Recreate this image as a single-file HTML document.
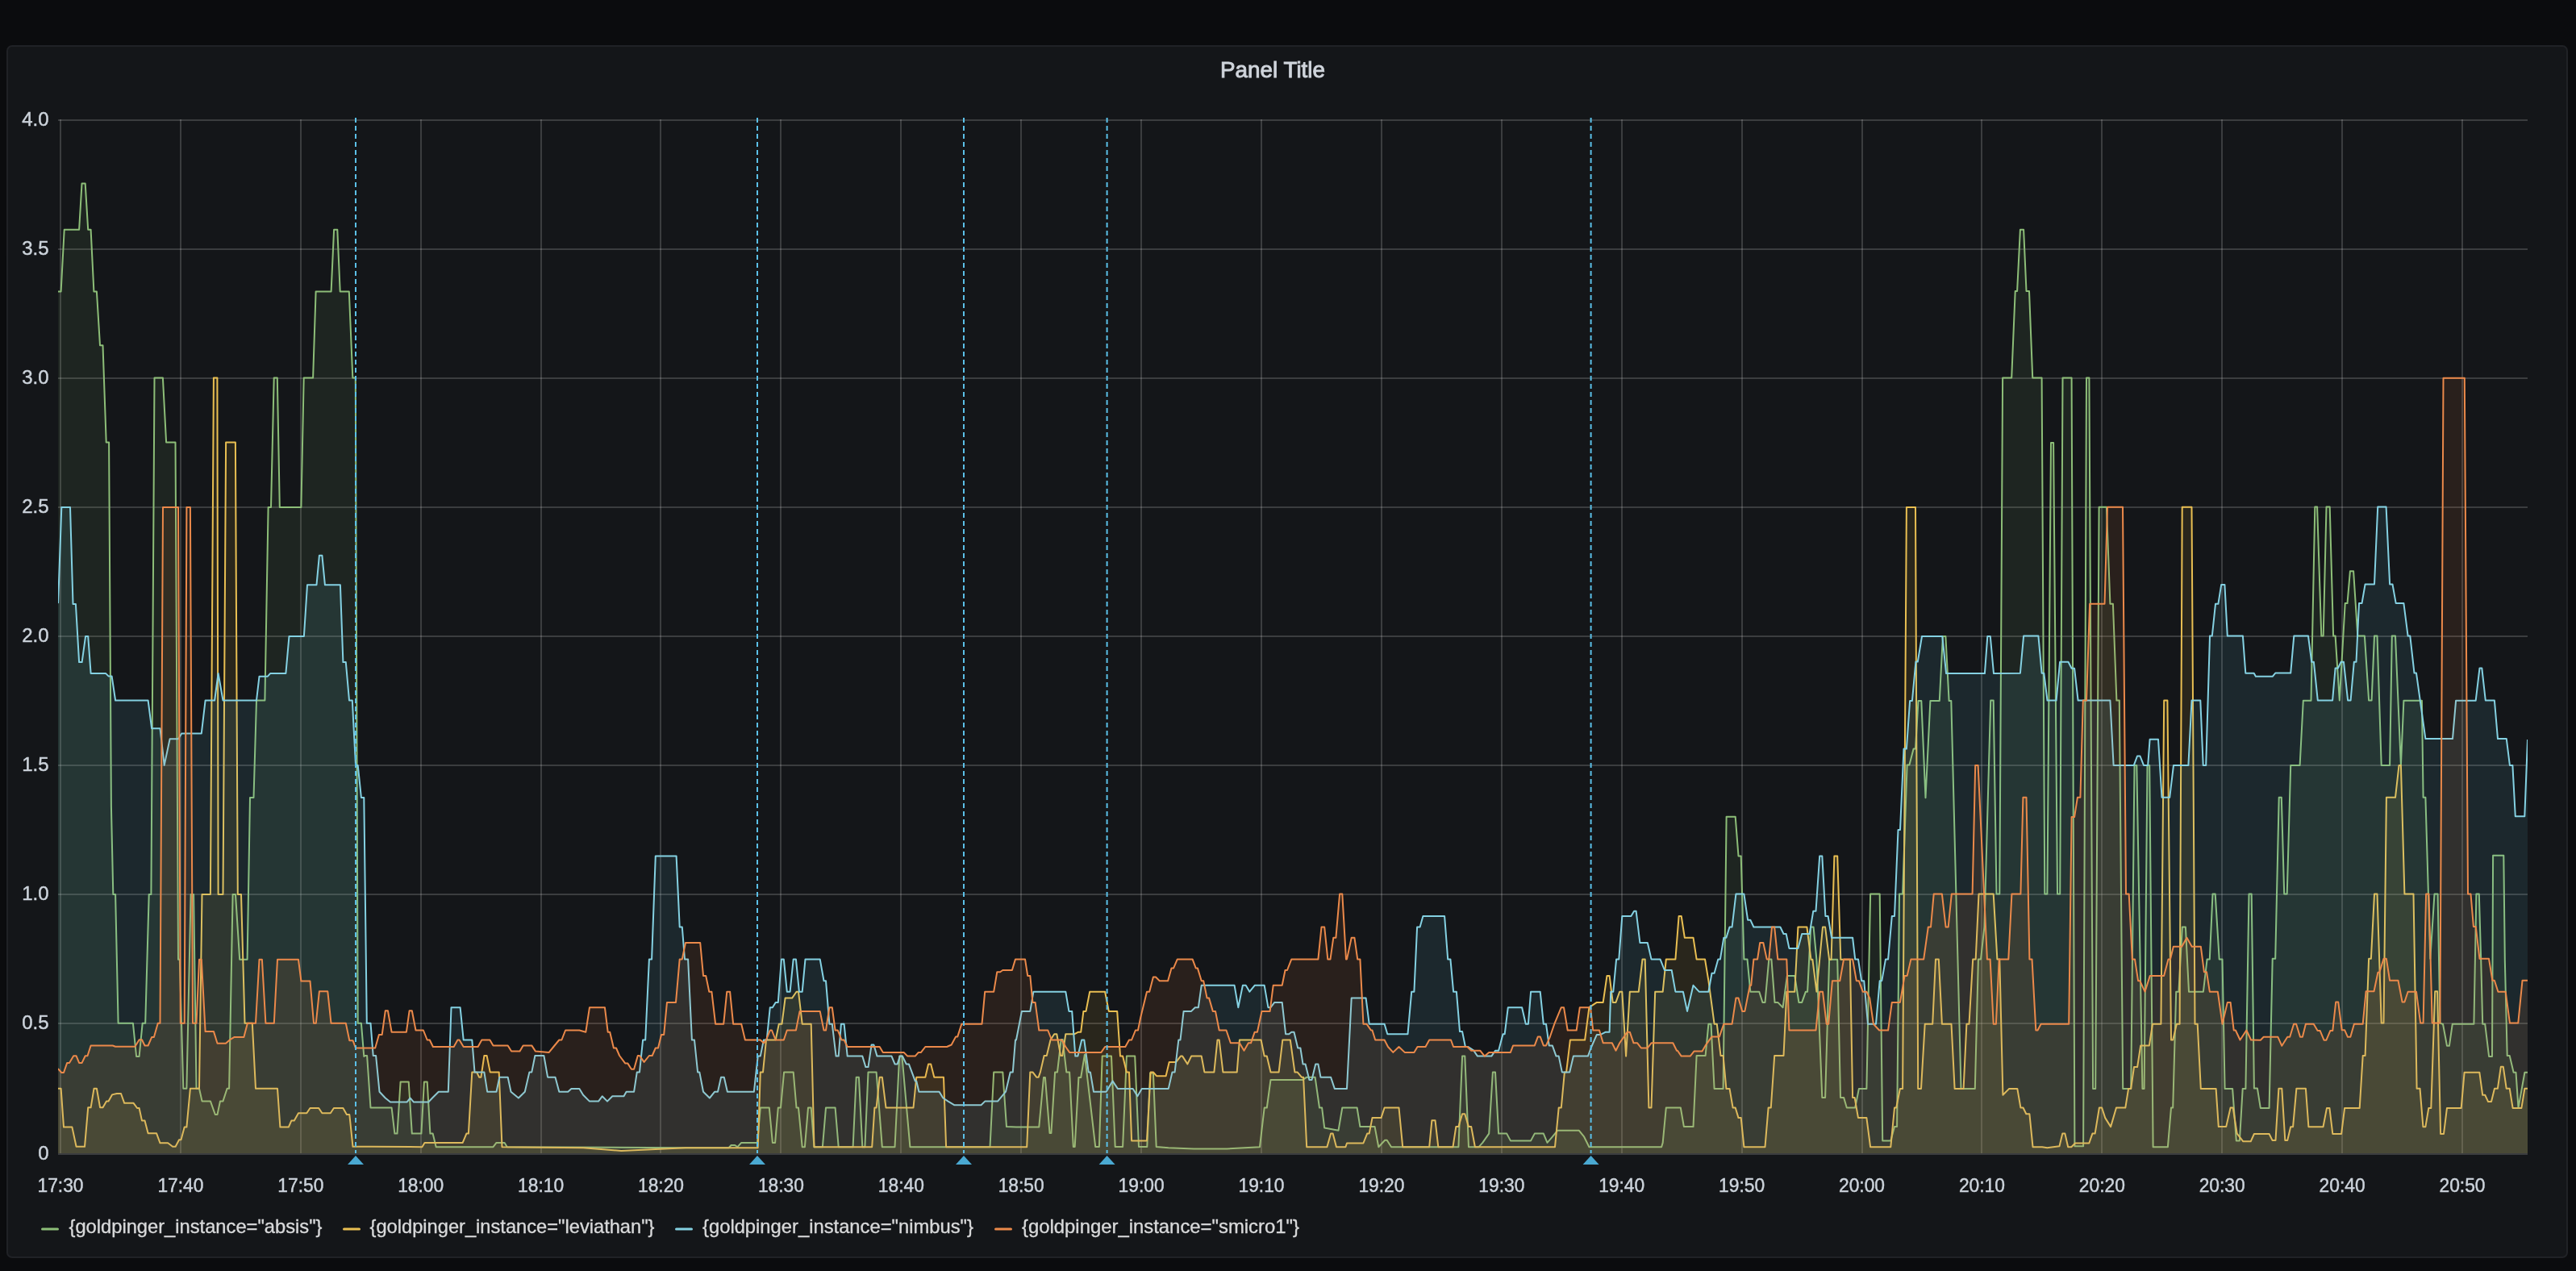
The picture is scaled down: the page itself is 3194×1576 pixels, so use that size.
<!DOCTYPE html>
<html><head><meta charset="utf-8"><style>
html,body{margin:0;padding:0;background:#0b0c0e;width:3194px;height:1576px;overflow:hidden}
svg{display:block;font-family:"Liberation Sans",sans-serif;will-change:transform}
.tk{fill:#ccd3db;font-size:24px;stroke:#ccd3db;stroke-width:0.45px}
.lg{fill:#d8d9da;font-size:24px;stroke:#d8d9da;stroke-width:0.35px}
</style></head><body>
<svg width="3194" height="1576" viewBox="0 0 3194 1576">
<rect x="0" y="0" width="3194" height="1576" fill="#0b0c0e"/>
<rect x="9" y="57" width="3174" height="1502" rx="6" ry="6" fill="#141619" stroke="#202226" stroke-width="2"/>
<text x="1578" y="95.5" text-anchor="middle" font-size="28" fill="#d0d5dc" stroke="#d0d5dc" stroke-width="0.9" textLength="130" lengthAdjust="spacingAndGlyphs">Panel Title</text>
<g><rect x="72" y="148" width="3062" height="2" fill="rgba(255,255,255,0.17)"/><rect x="72" y="308" width="3062" height="2" fill="rgba(255,255,255,0.17)"/><rect x="72" y="468" width="3062" height="2" fill="rgba(255,255,255,0.17)"/><rect x="72" y="628" width="3062" height="2" fill="rgba(255,255,255,0.17)"/><rect x="72" y="788" width="3062" height="2" fill="rgba(255,255,255,0.17)"/><rect x="72" y="948" width="3062" height="2" fill="rgba(255,255,255,0.17)"/><rect x="72" y="1108" width="3062" height="2" fill="rgba(255,255,255,0.17)"/><rect x="72" y="1268" width="3062" height="2" fill="rgba(255,255,255,0.17)"/><rect x="74" y="148" width="2" height="1282" fill="rgba(255,255,255,0.17)"/><rect x="223" y="148" width="2" height="1282" fill="rgba(255,255,255,0.17)"/><rect x="372" y="148" width="2" height="1282" fill="rgba(255,255,255,0.17)"/><rect x="521" y="148" width="2" height="1282" fill="rgba(255,255,255,0.17)"/><rect x="670" y="148" width="2" height="1282" fill="rgba(255,255,255,0.17)"/><rect x="818" y="148" width="2" height="1282" fill="rgba(255,255,255,0.17)"/><rect x="967" y="148" width="2" height="1282" fill="rgba(255,255,255,0.17)"/><rect x="1116" y="148" width="2" height="1282" fill="rgba(255,255,255,0.17)"/><rect x="1265" y="148" width="2" height="1282" fill="rgba(255,255,255,0.17)"/><rect x="1414" y="148" width="2" height="1282" fill="rgba(255,255,255,0.17)"/><rect x="1563" y="148" width="2" height="1282" fill="rgba(255,255,255,0.17)"/><rect x="1712" y="148" width="2" height="1282" fill="rgba(255,255,255,0.17)"/><rect x="1861" y="148" width="2" height="1282" fill="rgba(255,255,255,0.17)"/><rect x="2010" y="148" width="2" height="1282" fill="rgba(255,255,255,0.17)"/><rect x="2159" y="148" width="2" height="1282" fill="rgba(255,255,255,0.17)"/><rect x="2308" y="148" width="2" height="1282" fill="rgba(255,255,255,0.17)"/><rect x="2456" y="148" width="2" height="1282" fill="rgba(255,255,255,0.17)"/><rect x="2605" y="148" width="2" height="1282" fill="rgba(255,255,255,0.17)"/><rect x="2754" y="148" width="2" height="1282" fill="rgba(255,255,255,0.17)"/><rect x="2903" y="148" width="2" height="1282" fill="rgba(255,255,255,0.17)"/><rect x="3052" y="148" width="2" height="1282" fill="rgba(255,255,255,0.17)"/><rect x="72" y="1430" width="3062" height="2" fill="rgba(255,255,255,0.17)"/></g>
<g class="tk"><text x="60.5" y="155.5" text-anchor="end">4.0</text><text x="60.5" y="315.5" text-anchor="end">3.5</text><text x="60.5" y="475.5" text-anchor="end">3.0</text><text x="60.5" y="635.5" text-anchor="end">2.5</text><text x="60.5" y="795.5" text-anchor="end">2.0</text><text x="60.5" y="955.5" text-anchor="end">1.5</text><text x="60.5" y="1115.5" text-anchor="end">1.0</text><text x="60.5" y="1275.5" text-anchor="end">0.5</text><text x="60.5" y="1437.5" text-anchor="end">0</text><text x="75.0" y="1478" text-anchor="middle" textLength="57" lengthAdjust="spacingAndGlyphs">17:30</text><text x="223.9" y="1478" text-anchor="middle" textLength="57" lengthAdjust="spacingAndGlyphs">17:40</text><text x="372.8" y="1478" text-anchor="middle" textLength="57" lengthAdjust="spacingAndGlyphs">17:50</text><text x="521.7" y="1478" text-anchor="middle" textLength="57" lengthAdjust="spacingAndGlyphs">18:00</text><text x="670.6" y="1478" text-anchor="middle" textLength="57" lengthAdjust="spacingAndGlyphs">18:10</text><text x="819.5" y="1478" text-anchor="middle" textLength="57" lengthAdjust="spacingAndGlyphs">18:20</text><text x="968.4" y="1478" text-anchor="middle" textLength="57" lengthAdjust="spacingAndGlyphs">18:30</text><text x="1117.3" y="1478" text-anchor="middle" textLength="57" lengthAdjust="spacingAndGlyphs">18:40</text><text x="1266.2" y="1478" text-anchor="middle" textLength="57" lengthAdjust="spacingAndGlyphs">18:50</text><text x="1415.1" y="1478" text-anchor="middle" textLength="57" lengthAdjust="spacingAndGlyphs">19:00</text><text x="1564.0" y="1478" text-anchor="middle" textLength="57" lengthAdjust="spacingAndGlyphs">19:10</text><text x="1712.9" y="1478" text-anchor="middle" textLength="57" lengthAdjust="spacingAndGlyphs">19:20</text><text x="1861.8" y="1478" text-anchor="middle" textLength="57" lengthAdjust="spacingAndGlyphs">19:30</text><text x="2010.7" y="1478" text-anchor="middle" textLength="57" lengthAdjust="spacingAndGlyphs">19:40</text><text x="2159.6" y="1478" text-anchor="middle" textLength="57" lengthAdjust="spacingAndGlyphs">19:50</text><text x="2308.5" y="1478" text-anchor="middle" textLength="57" lengthAdjust="spacingAndGlyphs">20:00</text><text x="2457.4" y="1478" text-anchor="middle" textLength="57" lengthAdjust="spacingAndGlyphs">20:10</text><text x="2606.3" y="1478" text-anchor="middle" textLength="57" lengthAdjust="spacingAndGlyphs">20:20</text><text x="2755.2" y="1478" text-anchor="middle" textLength="57" lengthAdjust="spacingAndGlyphs">20:30</text><text x="2904.1" y="1478" text-anchor="middle" textLength="57" lengthAdjust="spacingAndGlyphs">20:40</text><text x="3053.0" y="1478" text-anchor="middle" textLength="57" lengthAdjust="spacingAndGlyphs">20:50</text></g>
<defs><clipPath id="pc"><rect x="72" y="146" width="3062" height="1285"/></clipPath></defs>
<g clip-path="url(#pc)"><path d="M72.0 1430 L72.0 361.5 L72.8 361.5 L75.6 361.5 L79.7 284.7 L98.1 284.7 L101.5 227.6 L105.7 227.6 L109.2 284.7 L112.6 284.7 L116.4 361.5 L119.9 361.5 L124.0 428.3 L127.5 428.3 L131.7 548.4 L135.1 548.4 L137.9 1000.0 L140.3 1109.1 L143.1 1109.1 L146.6 1268.7 L164.9 1268.7 L169.1 1310.0 L172.6 1310.0 L176.7 1268.7 L180.2 1268.7 L184.7 1109.1 L187.4 1109.1 L191.5 468.5 L201.9 468.5 L206.1 548.4 L217.5 548.4 L221.0 1189.8 L222.8 1189.8 L227.3 1349.8 L231.4 1349.8 L236.6 1109.1 L240.1 1109.1 L243.5 1349.8 L247.0 1349.8 L250.5 1365.4 L260.9 1365.4 L266.8 1382.0 L269.5 1382.0 L273.0 1365.4 L276.5 1365.4 L281.6 1349.8 L284.1 1349.8 L288.6 1109.1 L292.0 1109.1 L297.2 1189.8 L306.6 1189.8 L310.0 989.0 L314.5 989.0 L318.0 868.5 L328.4 868.5 L332.6 628.9 L336.0 628.9 L339.7 468.5 L343.8 468.5 L346.8 628.9 L373.4 628.9 L376.7 468.5 L388.1 468.5 L391.6 361.5 L410.6 361.5 L414.1 284.7 L418.3 284.7 L421.7 361.5 L432.8 361.5 L437.3 468.5 L440.8 468.5 L443.7 1268.7 L447.9 1268.7 L451.3 1310.0 L452.6 1309.0 L455.1 1309.0 L459.5 1373.5 L485.6 1373.5 L489.4 1405.6 L492.5 1405.6 L496.6 1341.4 L506.7 1341.4 L510.8 1405.6 L522.4 1405.6 L525.9 1341.4 L529.7 1341.4 L533.4 1405.6 L536.6 1405.6 L540.7 1422.2 L611.5 1422.2 L615.5 1416.9 L625.6 1416.9 L628.8 1422.2 L850.0 1423.2 L903.5 1423.2 L906.6 1420.0 L911.3 1420.0 L914.5 1422.2 L919.2 1416.9 L939.0 1416.9 L942.8 1373.5 L953.8 1373.5 L957.9 1416.9 L961.1 1416.9 L964.8 1373.5 L968.0 1373.5 L972.1 1329.4 L983.7 1329.4 L987.5 1373.5 L990.0 1373.5 L994.7 1422.2 L997.9 1422.2 L1002.0 1373.5 L1005.7 1373.5 L1009.5 1422.2 L1019.9 1422.2 L1024.0 1373.5 L1035.6 1373.5 L1039.7 1422.2 L1057.6 1422.2 L1061.7 1335.7 L1064.9 1335.7 L1069.3 1422.2 L1072.4 1422.2 L1076.5 1329.4 L1086.6 1329.4 L1093.8 1422.2 L1109.5 1422.2 L1115.2 1309.6 L1118.4 1309.6 L1128.4 1422.2 L1227.5 1422.2 L1232.2 1329.4 L1243.3 1329.4 L1248.0 1397.1 L1260.0 1397.4 L1288.3 1397.4 L1294.0 1336.0 L1295.9 1336.0 L1301.5 1404.9 L1303.4 1404.9 L1308.1 1329.4 L1311.0 1329.4 L1315.7 1288.9 L1317.6 1288.9 L1322.3 1329.4 L1326.1 1329.4 L1330.8 1421.9 L1332.7 1421.9 L1337.4 1336.0 L1340.2 1336.0 L1344.9 1307.7 L1358.2 1421.9 L1362.9 1421.9 L1366.7 1309.6 L1378.0 1309.6 L1382.7 1421.9 L1392.1 1421.9 L1396.9 1309.6 L1407.2 1309.6 L1412.0 1421.9 L1422.3 1421.9 L1426.1 1330.4 L1429.9 1330.4 L1433.7 1421.9 L1448.8 1423.2 L1480.2 1424.4 L1521.1 1424.4 L1562.0 1422.2 L1567.7 1373.5 L1570.8 1373.5 L1575.5 1338.9 L1615.5 1338.9 L1620.2 1335.7 L1630.6 1335.7 L1636.0 1373.5 L1639.1 1373.5 L1642.2 1398.6 L1659.5 1401.8 L1664.3 1373.5 L1670.0 1373.5 L1682.6 1373.5 L1686.4 1397.1 L1704.6 1397.1 L1709.3 1422.2 L1717.2 1413.7 L1719.7 1413.7 L1725.1 1422.2 L1808.4 1422.2 L1813.1 1309.6 L1816.3 1309.6 L1821.0 1422.2 L1833.6 1422.2 L1838.3 1416.9 L1846.2 1405.6 L1850.9 1329.4 L1854.0 1329.4 L1858.1 1405.6 L1868.2 1405.6 L1872.9 1414.4 L1898.1 1414.4 L1902.8 1405.6 L1913.8 1405.6 L1918.5 1416.9 L1924.8 1409.7 L1931.1 1401.8 L1957.9 1401.8 L1964.2 1409.7 L1970.4 1422.2 L2060.1 1422.2 L2061.7 1416.9 L2065.8 1373.5 L2080.0 1373.5 L2083.8 1373.5 L2087.9 1397.1 L2099.5 1397.1 L2103.6 1309.0 L2114.6 1309.0 L2118.4 1269.7 L2121.5 1269.7 L2125.6 1349.9 L2136.6 1349.9 L2140.6 1012.7 L2151.7 1012.7 L2155.5 1061.4 L2158.7 1061.4 L2162.4 1189.4 L2166.5 1189.4 L2170.3 1229.7 L2181.3 1229.7 L2185.4 1242.9 L2188.5 1242.9 L2193.3 1189.4 L2196.4 1189.4 L2200.5 1242.9 L2204.3 1242.9 L2210.6 1249.2 L2215.9 1209.9 L2225.3 1209.9 L2230.4 1242.9 L2234.2 1242.9 L2238.9 1229.7 L2241.1 1229.7 L2245.2 1149.5 L2248.6 1149.5 L2252.4 1189.8 L2259.3 1360.9 L2263.1 1360.9 L2268.1 1189.8 L2278.2 1189.8 L2282.0 1360.9 L2286.1 1360.9 L2289.8 1373.5 L2300.2 1373.5 L2304.9 1349.9 L2314.4 1349.9 L2319.1 1108.6 L2330.7 1108.6 L2334.2 1414.4 L2344.3 1414.4 L2349.0 1397.1 L2352.1 1397.1 L2355.0 1108.6 L2359.1 1108.6 L2364.6 948.6 L2367.4 948.6 L2372.6 928.6 L2375.0 928.6 L2378.5 869.0 L2382.3 869.0 L2387.5 989.2 L2393.4 869.0 L2404.8 869.0 L2408.9 789.0 L2412.4 789.0 L2416.6 869.0 L2419.3 869.0 L2431.5 1349.9 L2448.8 1349.9 L2452.9 1189.4 L2456.0 1189.4 L2460.4 1149.5 L2468.2 868.6 L2471.7 868.6 L2475.5 1108.6 L2479.3 1108.6 L2483.1 468.4 L2494.2 468.4 L2498.7 361.0 L2501.1 361.0 L2504.9 284.8 L2509.1 284.8 L2512.5 361.0 L2516.0 361.0 L2520.2 468.4 L2531.6 468.4 L2535.3 1108.6 L2538.4 1108.6 L2543.0 549.0 L2546.1 549.0 L2551.0 1108.6 L2554.2 1108.6 L2557.5 468.4 L2568.6 468.4 L2572.4 1421.3 L2583.1 1421.3 L2587.0 468.4 L2590.4 468.4 L2595.1 1349.9 L2598.2 1349.9 L2602.6 628.7 L2611.9 628.7 L2616.4 748.8 L2619.9 748.8 L2624.4 868.6 L2627.8 868.6 L2632.2 1349.9 L2642.2 1349.9 L2646.5 948.9 L2649.3 948.9 L2656.4 1349.9 L2658.6 1349.9 L2662.5 948.9 L2665.2 948.9 L2669.6 1422.2 L2687.9 1422.2 L2692.0 1373.5 L2694.2 1373.5 L2698.2 1229.7 L2701.4 1229.7 L2705.8 1149.5 L2709.9 1149.5 L2714.0 1229.7 L2731.9 1229.7 L2736.6 1189.4 L2739.8 1189.4 L2743.5 1108.6 L2746.7 1108.6 L2751.7 1189.4 L2755.5 1189.4 L2758.6 1349.9 L2768.1 1349.9 L2772.8 1414.4 L2776.9 1414.4 L2780.7 1349.9 L2784.4 1349.9 L2788.5 1108.6 L2791.7 1108.6 L2794.9 1349.4 L2798.9 1349.4 L2802.8 1373.9 L2813.6 1373.9 L2817.7 1188.8 L2821.2 1188.8 L2825.7 988.8 L2828.8 988.8 L2832.2 1108.5 L2835.7 1108.5 L2840.2 949.0 L2851.6 949.0 L2855.8 868.7 L2865.5 868.7 L2870.3 628.6 L2873.1 628.6 L2878.3 788.6 L2880.7 788.6 L2884.5 628.6 L2888.7 628.6 L2893.1 788.6 L2895.6 788.6 L2900.8 868.5 L2907.7 748.1 L2910.5 748.1 L2913.9 708.3 L2918.1 708.3 L2923.3 788.6 L2931.9 788.6 L2937.1 868.5 L2940.6 868.5 L2944.0 788.6 L2947.5 788.6 L2952.7 949.0 L2963.1 949.0 L2965.8 788.6 L2970.0 788.6 L2976.9 949.0 L2980.4 868.7 L3002.9 868.7 L3004.6 988.8 L3007.4 988.8 L3013.3 1188.8 L3018.5 1108.5 L3022.6 1108.5 L3025.4 1268.4 L3028.0 1269.7 L3029.0 1269.7 L3034.0 1296.8 L3036.9 1296.8 L3040.8 1269.7 L3067.4 1269.7 L3070.4 1108.5 L3073.8 1108.5 L3076.2 1190.0 L3078.2 1269.7 L3081.2 1269.7 L3086.1 1310.0 L3090.0 1310.0 L3091.1 1060.8 L3104.3 1060.8 L3105.8 1190.0 L3108.7 1309.0 L3111.7 1309.0 L3116.6 1329.7 L3119.5 1329.7 L3122.5 1373.9 L3130.4 1329.7 L3133.9 1329.7 L3134.0 1329.7 L3134.0 1430 Z" fill="#7EB26D" fill-opacity="0.1"/><path d="M72.0 361.5 L72.8 361.5 L75.6 361.5 L79.7 284.7 L98.1 284.7 L101.5 227.6 L105.7 227.6 L109.2 284.7 L112.6 284.7 L116.4 361.5 L119.9 361.5 L124.0 428.3 L127.5 428.3 L131.7 548.4 L135.1 548.4 L137.9 1000.0 L140.3 1109.1 L143.1 1109.1 L146.6 1268.7 L164.9 1268.7 L169.1 1310.0 L172.6 1310.0 L176.7 1268.7 L180.2 1268.7 L184.7 1109.1 L187.4 1109.1 L191.5 468.5 L201.9 468.5 L206.1 548.4 L217.5 548.4 L221.0 1189.8 L222.8 1189.8 L227.3 1349.8 L231.4 1349.8 L236.6 1109.1 L240.1 1109.1 L243.5 1349.8 L247.0 1349.8 L250.5 1365.4 L260.9 1365.4 L266.8 1382.0 L269.5 1382.0 L273.0 1365.4 L276.5 1365.4 L281.6 1349.8 L284.1 1349.8 L288.6 1109.1 L292.0 1109.1 L297.2 1189.8 L306.6 1189.8 L310.0 989.0 L314.5 989.0 L318.0 868.5 L328.4 868.5 L332.6 628.9 L336.0 628.9 L339.7 468.5 L343.8 468.5 L346.8 628.9 L373.4 628.9 L376.7 468.5 L388.1 468.5 L391.6 361.5 L410.6 361.5 L414.1 284.7 L418.3 284.7 L421.7 361.5 L432.8 361.5 L437.3 468.5 L440.8 468.5 L443.7 1268.7 L447.9 1268.7 L451.3 1310.0 L452.6 1309.0 L455.1 1309.0 L459.5 1373.5 L485.6 1373.5 L489.4 1405.6 L492.5 1405.6 L496.6 1341.4 L506.7 1341.4 L510.8 1405.6 L522.4 1405.6 L525.9 1341.4 L529.7 1341.4 L533.4 1405.6 L536.6 1405.6 L540.7 1422.2 L611.5 1422.2 L615.5 1416.9 L625.6 1416.9 L628.8 1422.2 L850.0 1423.2 L903.5 1423.2 L906.6 1420.0 L911.3 1420.0 L914.5 1422.2 L919.2 1416.9 L939.0 1416.9 L942.8 1373.5 L953.8 1373.5 L957.9 1416.9 L961.1 1416.9 L964.8 1373.5 L968.0 1373.5 L972.1 1329.4 L983.7 1329.4 L987.5 1373.5 L990.0 1373.5 L994.7 1422.2 L997.9 1422.2 L1002.0 1373.5 L1005.7 1373.5 L1009.5 1422.2 L1019.9 1422.2 L1024.0 1373.5 L1035.6 1373.5 L1039.7 1422.2 L1057.6 1422.2 L1061.7 1335.7 L1064.9 1335.7 L1069.3 1422.2 L1072.4 1422.2 L1076.5 1329.4 L1086.6 1329.4 L1093.8 1422.2 L1109.5 1422.2 L1115.2 1309.6 L1118.4 1309.6 L1128.4 1422.2 L1227.5 1422.2 L1232.2 1329.4 L1243.3 1329.4 L1248.0 1397.1 L1260.0 1397.4 L1288.3 1397.4 L1294.0 1336.0 L1295.9 1336.0 L1301.5 1404.9 L1303.4 1404.9 L1308.1 1329.4 L1311.0 1329.4 L1315.7 1288.9 L1317.6 1288.9 L1322.3 1329.4 L1326.1 1329.4 L1330.8 1421.9 L1332.7 1421.9 L1337.4 1336.0 L1340.2 1336.0 L1344.9 1307.7 L1358.2 1421.9 L1362.9 1421.9 L1366.7 1309.6 L1378.0 1309.6 L1382.7 1421.9 L1392.1 1421.9 L1396.9 1309.6 L1407.2 1309.6 L1412.0 1421.9 L1422.3 1421.9 L1426.1 1330.4 L1429.9 1330.4 L1433.7 1421.9 L1448.8 1423.2 L1480.2 1424.4 L1521.1 1424.4 L1562.0 1422.2 L1567.7 1373.5 L1570.8 1373.5 L1575.5 1338.9 L1615.5 1338.9 L1620.2 1335.7 L1630.6 1335.7 L1636.0 1373.5 L1639.1 1373.5 L1642.2 1398.6 L1659.5 1401.8 L1664.3 1373.5 L1670.0 1373.5 L1682.6 1373.5 L1686.4 1397.1 L1704.6 1397.1 L1709.3 1422.2 L1717.2 1413.7 L1719.7 1413.7 L1725.1 1422.2 L1808.4 1422.2 L1813.1 1309.6 L1816.3 1309.6 L1821.0 1422.2 L1833.6 1422.2 L1838.3 1416.9 L1846.2 1405.6 L1850.9 1329.4 L1854.0 1329.4 L1858.1 1405.6 L1868.2 1405.6 L1872.9 1414.4 L1898.1 1414.4 L1902.8 1405.6 L1913.8 1405.6 L1918.5 1416.9 L1924.8 1409.7 L1931.1 1401.8 L1957.9 1401.8 L1964.2 1409.7 L1970.4 1422.2 L2060.1 1422.2 L2061.7 1416.9 L2065.8 1373.5 L2080.0 1373.5 L2083.8 1373.5 L2087.9 1397.1 L2099.5 1397.1 L2103.6 1309.0 L2114.6 1309.0 L2118.4 1269.7 L2121.5 1269.7 L2125.6 1349.9 L2136.6 1349.9 L2140.6 1012.7 L2151.7 1012.7 L2155.5 1061.4 L2158.7 1061.4 L2162.4 1189.4 L2166.5 1189.4 L2170.3 1229.7 L2181.3 1229.7 L2185.4 1242.9 L2188.5 1242.9 L2193.3 1189.4 L2196.4 1189.4 L2200.5 1242.9 L2204.3 1242.9 L2210.6 1249.2 L2215.9 1209.9 L2225.3 1209.9 L2230.4 1242.9 L2234.2 1242.9 L2238.9 1229.7 L2241.1 1229.7 L2245.2 1149.5 L2248.6 1149.5 L2252.4 1189.8 L2259.3 1360.9 L2263.1 1360.9 L2268.1 1189.8 L2278.2 1189.8 L2282.0 1360.9 L2286.1 1360.9 L2289.8 1373.5 L2300.2 1373.5 L2304.9 1349.9 L2314.4 1349.9 L2319.1 1108.6 L2330.7 1108.6 L2334.2 1414.4 L2344.3 1414.4 L2349.0 1397.1 L2352.1 1397.1 L2355.0 1108.6 L2359.1 1108.6 L2364.6 948.6 L2367.4 948.6 L2372.6 928.6 L2375.0 928.6 L2378.5 869.0 L2382.3 869.0 L2387.5 989.2 L2393.4 869.0 L2404.8 869.0 L2408.9 789.0 L2412.4 789.0 L2416.6 869.0 L2419.3 869.0 L2431.5 1349.9 L2448.8 1349.9 L2452.9 1189.4 L2456.0 1189.4 L2460.4 1149.5 L2468.2 868.6 L2471.7 868.6 L2475.5 1108.6 L2479.3 1108.6 L2483.1 468.4 L2494.2 468.4 L2498.7 361.0 L2501.1 361.0 L2504.9 284.8 L2509.1 284.8 L2512.5 361.0 L2516.0 361.0 L2520.2 468.4 L2531.6 468.4 L2535.3 1108.6 L2538.4 1108.6 L2543.0 549.0 L2546.1 549.0 L2551.0 1108.6 L2554.2 1108.6 L2557.5 468.4 L2568.6 468.4 L2572.4 1421.3 L2583.1 1421.3 L2587.0 468.4 L2590.4 468.4 L2595.1 1349.9 L2598.2 1349.9 L2602.6 628.7 L2611.9 628.7 L2616.4 748.8 L2619.9 748.8 L2624.4 868.6 L2627.8 868.6 L2632.2 1349.9 L2642.2 1349.9 L2646.5 948.9 L2649.3 948.9 L2656.4 1349.9 L2658.6 1349.9 L2662.5 948.9 L2665.2 948.9 L2669.6 1422.2 L2687.9 1422.2 L2692.0 1373.5 L2694.2 1373.5 L2698.2 1229.7 L2701.4 1229.7 L2705.8 1149.5 L2709.9 1149.5 L2714.0 1229.7 L2731.9 1229.7 L2736.6 1189.4 L2739.8 1189.4 L2743.5 1108.6 L2746.7 1108.6 L2751.7 1189.4 L2755.5 1189.4 L2758.6 1349.9 L2768.1 1349.9 L2772.8 1414.4 L2776.9 1414.4 L2780.7 1349.9 L2784.4 1349.9 L2788.5 1108.6 L2791.7 1108.6 L2794.9 1349.4 L2798.9 1349.4 L2802.8 1373.9 L2813.6 1373.9 L2817.7 1188.8 L2821.2 1188.8 L2825.7 988.8 L2828.8 988.8 L2832.2 1108.5 L2835.7 1108.5 L2840.2 949.0 L2851.6 949.0 L2855.8 868.7 L2865.5 868.7 L2870.3 628.6 L2873.1 628.6 L2878.3 788.6 L2880.7 788.6 L2884.5 628.6 L2888.7 628.6 L2893.1 788.6 L2895.6 788.6 L2900.8 868.5 L2907.7 748.1 L2910.5 748.1 L2913.9 708.3 L2918.1 708.3 L2923.3 788.6 L2931.9 788.6 L2937.1 868.5 L2940.6 868.5 L2944.0 788.6 L2947.5 788.6 L2952.7 949.0 L2963.1 949.0 L2965.8 788.6 L2970.0 788.6 L2976.9 949.0 L2980.4 868.7 L3002.9 868.7 L3004.6 988.8 L3007.4 988.8 L3013.3 1188.8 L3018.5 1108.5 L3022.6 1108.5 L3025.4 1268.4 L3028.0 1269.7 L3029.0 1269.7 L3034.0 1296.8 L3036.9 1296.8 L3040.8 1269.7 L3067.4 1269.7 L3070.4 1108.5 L3073.8 1108.5 L3076.2 1190.0 L3078.2 1269.7 L3081.2 1269.7 L3086.1 1310.0 L3090.0 1310.0 L3091.1 1060.8 L3104.3 1060.8 L3105.8 1190.0 L3108.7 1309.0 L3111.7 1309.0 L3116.6 1329.7 L3119.5 1329.7 L3122.5 1373.9 L3130.4 1329.7 L3133.9 1329.7 L3134.0 1329.7" fill="none" stroke="#8dbe78" stroke-width="2" stroke-linejoin="round"/><path d="M72.0 1430 L72.0 1349.8 L72.1 1349.8 L75.6 1349.8 L79.0 1397.6 L89.4 1397.6 L94.6 1421.8 L105.0 1421.8 L109.2 1373.3 L112.6 1373.3 L116.5 1349.8 L119.9 1349.8 L124.1 1373.3 L127.5 1373.3 L132.0 1365.4 L134.5 1365.4 L139.0 1357.4 L144.8 1356.0 L150.0 1356.0 L154.2 1367.8 L165.6 1367.8 L170.1 1374.0 L172.6 1374.0 L176.0 1389.6 L179.5 1389.6 L183.6 1405.2 L194.0 1405.2 L198.5 1417.3 L208.2 1417.3 L214.1 1421.8 L217.6 1421.8 L222.1 1413.2 L224.5 1413.2 L228.7 1397.6 L231.4 1397.6 L235.9 1349.8 L245.3 1349.8 L247.0 1349.8 L250.5 1109.1 L260.9 1109.1 L264.9 468.5 L269.4 468.5 L270.6 1109.1 L276.5 1109.1 L280.1 548.4 L291.9 548.4 L294.8 1109.1 L299.0 1109.1 L303.5 1268.7 L312.8 1268.7 L317.0 1349.8 L344.0 1349.8 L347.4 1397.6 L357.8 1397.6 L361.3 1389.6 L364.8 1389.6 L370.0 1380.3 L380.3 1380.3 L384.5 1374.0 L395.2 1374.0 L399.4 1380.3 L409.8 1380.3 L413.9 1374.0 L425.4 1374.0 L429.9 1382.0 L433.3 1382.0 L437.5 1421.8 L460.0 1421.8 L523.4 1422.2 L526.5 1416.9 L573.7 1416.9 L578.4 1405.6 L580.9 1405.6 L585.3 1329.4 L591.0 1329.4 L594.2 1335.7 L596.4 1335.7 L600.4 1309.0 L603.6 1309.0 L607.7 1329.4 L618.7 1329.4 L622.5 1422.2 L723.1 1423.2 L770.3 1427.0 L850.0 1423.2 L939.7 1423.2 L942.8 1329.4 L946.0 1329.4 L950.0 1289.5 L961.7 1289.5 L965.8 1269.7 L969.5 1269.7 L973.6 1237.6 L982.1 1237.6 L987.5 1229.7 L990.0 1229.7 L994.7 1269.7 L1005.7 1269.7 L1009.5 1422.2 L1081.2 1422.2 L1084.4 1373.5 L1086.6 1373.5 L1090.7 1335.7 L1093.8 1335.7 L1098.5 1373.5 L1132.5 1373.5 L1136.3 1335.7 L1147.3 1335.7 L1151.1 1319.4 L1154.2 1319.4 L1158.3 1335.7 L1170.0 1335.7 L1173.1 1422.2 L1260.0 1422.2 L1273.2 1422.2 L1277.3 1329.4 L1280.4 1329.4 L1285.2 1335.7 L1287.7 1335.7 L1289.9 1329.4 L1294.6 1309.0 L1297.8 1309.0 L1302.5 1289.5 L1307.2 1282.2 L1310.3 1282.2 L1315.1 1309.0 L1317.3 1309.0 L1321.3 1282.2 L1332.4 1282.2 L1337.1 1279.7 L1340.2 1279.7 L1343.4 1253.9 L1346.5 1253.9 L1351.2 1229.7 L1370.1 1229.7 L1374.8 1253.9 L1385.2 1253.9 L1389.0 1309.6 L1392.1 1309.6 L1396.9 1329.4 L1400.0 1329.4 L1403.1 1414.4 L1422.0 1414.4 L1426.7 1329.4 L1429.9 1329.4 L1434.0 1334.2 L1445.6 1334.2 L1449.7 1316.9 L1458.2 1316.9 L1463.9 1309.6 L1466.1 1309.6 L1472.4 1319.4 L1477.1 1309.6 L1489.7 1309.6 L1493.4 1329.4 L1505.4 1329.4 L1509.5 1289.5 L1511.7 1289.5 L1516.4 1329.4 L1533.7 1329.4 L1536.9 1289.5 L1563.6 1289.5 L1567.7 1309.6 L1570.8 1309.6 L1575.5 1329.4 L1585.6 1329.4 L1590.3 1289.5 L1599.8 1289.5 L1605.4 1329.4 L1608.6 1329.4 L1613.9 1335.7 L1616.1 1335.7 L1620.2 1422.2 L1645.4 1422.2 L1650.1 1405.6 L1652.6 1405.6 L1657.0 1422.2 L1668.4 1422.2 L1670.0 1417.5 L1690.4 1417.5 L1695.2 1405.6 L1697.7 1405.6 L1701.5 1386.1 L1712.5 1386.1 L1716.6 1373.5 L1734.5 1373.5 L1739.2 1422.2 L1772.2 1422.2 L1775.4 1389.2 L1779.5 1389.2 L1783.3 1422.2 L1801.5 1422.2 L1805.3 1397.1 L1808.4 1397.1 L1813.1 1381.3 L1816.3 1381.3 L1821.0 1397.1 L1824.2 1397.1 L1828.9 1422.2 L1928.0 1422.2 L1932.7 1373.5 L1935.8 1373.5 L1939.9 1329.4 L1942.1 1329.4 L1946.9 1289.5 L1965.1 1289.5 L1970.4 1249.2 L1979.9 1242.9 L1987.7 1242.9 L1992.5 1209.9 L1995.6 1209.9 L1999.7 1242.9 L2003.5 1242.9 L2008.2 1229.7 L2011.3 1229.7 L2016.1 1309.6 L2020.8 1229.7 L2031.8 1229.7 L2036.5 1189.4 L2039.7 1189.4 L2044.4 1373.5 L2047.5 1373.5 L2052.2 1229.7 L2061.7 1229.7 L2065.8 1189.4 L2077.4 1189.4 L2081.6 1136.0 L2084.7 1136.0 L2088.8 1162.7 L2099.5 1162.7 L2103.6 1189.4 L2114.0 1189.4 L2118.4 1216.2 L2125.6 1269.7 L2128.8 1269.7 L2133.5 1309.0 L2136.6 1309.0 L2140.4 1349.9 L2144.5 1349.9 L2148.6 1373.5 L2151.7 1373.5 L2155.5 1386.1 L2158.7 1386.1 L2162.4 1422.2 L2188.5 1422.2 L2192.6 1373.5 L2195.8 1373.5 L2200.2 1309.0 L2211.5 1309.0 L2215.3 1229.7 L2225.3 1229.7 L2229.4 1149.5 L2240.4 1149.5 L2245.5 1189.8 L2247.4 1189.8 L2252.4 1229.7 L2260.0 1149.5 L2263.1 1149.5 L2268.1 1189.8 L2270.6 1189.8 L2274.4 1061.4 L2278.2 1061.4 L2282.3 1189.8 L2293.9 1189.8 L2297.1 1360.9 L2299.6 1360.9 L2304.0 1386.1 L2314.4 1386.1 L2319.1 1422.2 L2344.3 1422.2 L2349.0 1373.5 L2351.2 1373.5 L2355.9 1349.9 L2359.1 1349.9 L2363.9 629.0 L2375.0 629.0 L2378.2 1349.9 L2382.0 1349.9 L2386.7 1269.7 L2396.2 1269.7 L2400.0 1189.4 L2403.8 1189.4 L2407.9 1269.7 L2419.5 1269.7 L2423.6 1349.9 L2434.6 1349.9 L2438.4 1269.7 L2441.5 1269.7 L2446.2 1189.4 L2449.7 1189.4 L2453.5 1108.6 L2471.7 1108.6 L2476.4 1189.4 L2479.3 1189.4 L2483.4 1357.7 L2491.2 1349.9 L2501.3 1349.9 L2505.4 1373.5 L2508.5 1373.5 L2512.3 1381.3 L2516.4 1381.3 L2520.5 1422.2 L2532.1 1422.2 L2538.4 1423.2 L2553.5 1421.3 L2557.3 1405.6 L2560.4 1405.6 L2564.2 1422.2 L2568.3 1422.2 L2573.0 1417.5 L2590.3 1417.5 L2594.4 1405.6 L2597.6 1405.6 L2602.9 1373.5 L2606.1 1373.5 L2610.2 1386.1 L2617.1 1397.1 L2624.0 1373.5 L2635.3 1373.5 L2639.1 1349.9 L2642.2 1349.9 L2646.0 1323.1 L2650.1 1323.1 L2654.2 1296.4 L2664.9 1296.4 L2669.0 1269.7 L2679.4 1269.7 L2683.2 868.6 L2687.4 868.6 L2692.0 1289.5 L2694.2 1289.5 L2698.9 1269.7 L2702.6 1269.7 L2705.7 628.7 L2717.5 628.7 L2721.5 1269.7 L2724.7 1269.7 L2728.8 1349.9 L2747.6 1349.9 L2750.8 1397.1 L2760.2 1397.1 L2765.6 1373.5 L2768.7 1373.5 L2773.7 1405.6 L2781.3 1415.3 L2790.7 1415.3 L2794.9 1406.0 L2813.6 1406.0 L2817.5 1413.9 L2821.5 1413.9 L2825.4 1349.7 L2829.3 1349.7 L2833.3 1413.9 L2836.2 1413.9 L2840.2 1397.2 L2843.1 1397.2 L2847.4 1349.7 L2858.9 1349.7 L2862.4 1397.2 L2880.5 1397.2 L2885.0 1373.9 L2888.4 1373.9 L2892.3 1406.0 L2903.1 1406.0 L2907.1 1373.9 L2925.7 1373.9 L2929.7 1309.0 L2932.6 1309.0 L2937.1 1188.8 L2939.9 1188.8 L2944.0 1108.5 L2947.5 1108.5 L2952.7 1268.4 L2955.5 1268.4 L2958.9 988.8 L2970.0 988.8 L2974.5 949.0 L2976.9 949.0 L2981.4 1108.5 L2992.5 1108.5 L2996.6 1349.7 L3000.5 1349.7 L3004.4 1397.2 L3007.4 1397.2 L3011.3 1373.9 L3014.3 1373.9 L3019.2 1229.3 L3022.1 1229.3 L3026.1 1406.0 L3030.0 1406.0 L3034.0 1373.9 L3051.7 1373.9 L3055.6 1329.7 L3074.3 1329.7 L3078.2 1357.8 L3081.2 1357.8 L3085.1 1366.1 L3089.0 1366.1 L3093.0 1349.7 L3096.9 1349.7 L3100.8 1322.8 L3103.8 1322.8 L3107.7 1349.7 L3111.7 1349.7 L3115.6 1373.9 L3126.4 1373.9 L3130.4 1349.7 L3133.9 1349.7 L3134.0 1349.7 L3134.0 1430 Z" fill="#EAB839" fill-opacity="0.1"/><path d="M72.0 1349.8 L72.1 1349.8 L75.6 1349.8 L79.0 1397.6 L89.4 1397.6 L94.6 1421.8 L105.0 1421.8 L109.2 1373.3 L112.6 1373.3 L116.5 1349.8 L119.9 1349.8 L124.1 1373.3 L127.5 1373.3 L132.0 1365.4 L134.5 1365.4 L139.0 1357.4 L144.8 1356.0 L150.0 1356.0 L154.2 1367.8 L165.6 1367.8 L170.1 1374.0 L172.6 1374.0 L176.0 1389.6 L179.5 1389.6 L183.6 1405.2 L194.0 1405.2 L198.5 1417.3 L208.2 1417.3 L214.1 1421.8 L217.6 1421.8 L222.1 1413.2 L224.5 1413.2 L228.7 1397.6 L231.4 1397.6 L235.9 1349.8 L245.3 1349.8 L247.0 1349.8 L250.5 1109.1 L260.9 1109.1 L264.9 468.5 L269.4 468.5 L270.6 1109.1 L276.5 1109.1 L280.1 548.4 L291.9 548.4 L294.8 1109.1 L299.0 1109.1 L303.5 1268.7 L312.8 1268.7 L317.0 1349.8 L344.0 1349.8 L347.4 1397.6 L357.8 1397.6 L361.3 1389.6 L364.8 1389.6 L370.0 1380.3 L380.3 1380.3 L384.5 1374.0 L395.2 1374.0 L399.4 1380.3 L409.8 1380.3 L413.9 1374.0 L425.4 1374.0 L429.9 1382.0 L433.3 1382.0 L437.5 1421.8 L460.0 1421.8 L523.4 1422.2 L526.5 1416.9 L573.7 1416.9 L578.4 1405.6 L580.9 1405.6 L585.3 1329.4 L591.0 1329.4 L594.2 1335.7 L596.4 1335.7 L600.4 1309.0 L603.6 1309.0 L607.7 1329.4 L618.7 1329.4 L622.5 1422.2 L723.1 1423.2 L770.3 1427.0 L850.0 1423.2 L939.7 1423.2 L942.8 1329.4 L946.0 1329.4 L950.0 1289.5 L961.7 1289.5 L965.8 1269.7 L969.5 1269.7 L973.6 1237.6 L982.1 1237.6 L987.5 1229.7 L990.0 1229.7 L994.7 1269.7 L1005.7 1269.7 L1009.5 1422.2 L1081.2 1422.2 L1084.4 1373.5 L1086.6 1373.5 L1090.7 1335.7 L1093.8 1335.7 L1098.5 1373.5 L1132.5 1373.5 L1136.3 1335.7 L1147.3 1335.7 L1151.1 1319.4 L1154.2 1319.4 L1158.3 1335.7 L1170.0 1335.7 L1173.1 1422.2 L1260.0 1422.2 L1273.2 1422.2 L1277.3 1329.4 L1280.4 1329.4 L1285.2 1335.7 L1287.7 1335.7 L1289.9 1329.4 L1294.6 1309.0 L1297.8 1309.0 L1302.5 1289.5 L1307.2 1282.2 L1310.3 1282.2 L1315.1 1309.0 L1317.3 1309.0 L1321.3 1282.2 L1332.4 1282.2 L1337.1 1279.7 L1340.2 1279.7 L1343.4 1253.9 L1346.5 1253.9 L1351.2 1229.7 L1370.1 1229.7 L1374.8 1253.9 L1385.2 1253.9 L1389.0 1309.6 L1392.1 1309.6 L1396.9 1329.4 L1400.0 1329.4 L1403.1 1414.4 L1422.0 1414.4 L1426.7 1329.4 L1429.9 1329.4 L1434.0 1334.2 L1445.6 1334.2 L1449.7 1316.9 L1458.2 1316.9 L1463.9 1309.6 L1466.1 1309.6 L1472.4 1319.4 L1477.1 1309.6 L1489.7 1309.6 L1493.4 1329.4 L1505.4 1329.4 L1509.5 1289.5 L1511.7 1289.5 L1516.4 1329.4 L1533.7 1329.4 L1536.9 1289.5 L1563.6 1289.5 L1567.7 1309.6 L1570.8 1309.6 L1575.5 1329.4 L1585.6 1329.4 L1590.3 1289.5 L1599.8 1289.5 L1605.4 1329.4 L1608.6 1329.4 L1613.9 1335.7 L1616.1 1335.7 L1620.2 1422.2 L1645.4 1422.2 L1650.1 1405.6 L1652.6 1405.6 L1657.0 1422.2 L1668.4 1422.2 L1670.0 1417.5 L1690.4 1417.5 L1695.2 1405.6 L1697.7 1405.6 L1701.5 1386.1 L1712.5 1386.1 L1716.6 1373.5 L1734.5 1373.5 L1739.2 1422.2 L1772.2 1422.2 L1775.4 1389.2 L1779.5 1389.2 L1783.3 1422.2 L1801.5 1422.2 L1805.3 1397.1 L1808.4 1397.1 L1813.1 1381.3 L1816.3 1381.3 L1821.0 1397.1 L1824.2 1397.1 L1828.9 1422.2 L1928.0 1422.2 L1932.7 1373.5 L1935.8 1373.5 L1939.9 1329.4 L1942.1 1329.4 L1946.9 1289.5 L1965.1 1289.5 L1970.4 1249.2 L1979.9 1242.9 L1987.7 1242.9 L1992.5 1209.9 L1995.6 1209.9 L1999.7 1242.9 L2003.5 1242.9 L2008.2 1229.7 L2011.3 1229.7 L2016.1 1309.6 L2020.8 1229.7 L2031.8 1229.7 L2036.5 1189.4 L2039.7 1189.4 L2044.4 1373.5 L2047.5 1373.5 L2052.2 1229.7 L2061.7 1229.7 L2065.8 1189.4 L2077.4 1189.4 L2081.6 1136.0 L2084.7 1136.0 L2088.8 1162.7 L2099.5 1162.7 L2103.6 1189.4 L2114.0 1189.4 L2118.4 1216.2 L2125.6 1269.7 L2128.8 1269.7 L2133.5 1309.0 L2136.6 1309.0 L2140.4 1349.9 L2144.5 1349.9 L2148.6 1373.5 L2151.7 1373.5 L2155.5 1386.1 L2158.7 1386.1 L2162.4 1422.2 L2188.5 1422.2 L2192.6 1373.5 L2195.8 1373.5 L2200.2 1309.0 L2211.5 1309.0 L2215.3 1229.7 L2225.3 1229.7 L2229.4 1149.5 L2240.4 1149.5 L2245.5 1189.8 L2247.4 1189.8 L2252.4 1229.7 L2260.0 1149.5 L2263.1 1149.5 L2268.1 1189.8 L2270.6 1189.8 L2274.4 1061.4 L2278.2 1061.4 L2282.3 1189.8 L2293.9 1189.8 L2297.1 1360.9 L2299.6 1360.9 L2304.0 1386.1 L2314.4 1386.1 L2319.1 1422.2 L2344.3 1422.2 L2349.0 1373.5 L2351.2 1373.5 L2355.9 1349.9 L2359.1 1349.9 L2363.9 629.0 L2375.0 629.0 L2378.2 1349.9 L2382.0 1349.9 L2386.7 1269.7 L2396.2 1269.7 L2400.0 1189.4 L2403.8 1189.4 L2407.9 1269.7 L2419.5 1269.7 L2423.6 1349.9 L2434.6 1349.9 L2438.4 1269.7 L2441.5 1269.7 L2446.2 1189.4 L2449.7 1189.4 L2453.5 1108.6 L2471.7 1108.6 L2476.4 1189.4 L2479.3 1189.4 L2483.4 1357.7 L2491.2 1349.9 L2501.3 1349.9 L2505.4 1373.5 L2508.5 1373.5 L2512.3 1381.3 L2516.4 1381.3 L2520.5 1422.2 L2532.1 1422.2 L2538.4 1423.2 L2553.5 1421.3 L2557.3 1405.6 L2560.4 1405.6 L2564.2 1422.2 L2568.3 1422.2 L2573.0 1417.5 L2590.3 1417.5 L2594.4 1405.6 L2597.6 1405.6 L2602.9 1373.5 L2606.1 1373.5 L2610.2 1386.1 L2617.1 1397.1 L2624.0 1373.5 L2635.3 1373.5 L2639.1 1349.9 L2642.2 1349.9 L2646.0 1323.1 L2650.1 1323.1 L2654.2 1296.4 L2664.9 1296.4 L2669.0 1269.7 L2679.4 1269.7 L2683.2 868.6 L2687.4 868.6 L2692.0 1289.5 L2694.2 1289.5 L2698.9 1269.7 L2702.6 1269.7 L2705.7 628.7 L2717.5 628.7 L2721.5 1269.7 L2724.7 1269.7 L2728.8 1349.9 L2747.6 1349.9 L2750.8 1397.1 L2760.2 1397.1 L2765.6 1373.5 L2768.7 1373.5 L2773.7 1405.6 L2781.3 1415.3 L2790.7 1415.3 L2794.9 1406.0 L2813.6 1406.0 L2817.5 1413.9 L2821.5 1413.9 L2825.4 1349.7 L2829.3 1349.7 L2833.3 1413.9 L2836.2 1413.9 L2840.2 1397.2 L2843.1 1397.2 L2847.4 1349.7 L2858.9 1349.7 L2862.4 1397.2 L2880.5 1397.2 L2885.0 1373.9 L2888.4 1373.9 L2892.3 1406.0 L2903.1 1406.0 L2907.1 1373.9 L2925.7 1373.9 L2929.7 1309.0 L2932.6 1309.0 L2937.1 1188.8 L2939.9 1188.8 L2944.0 1108.5 L2947.5 1108.5 L2952.7 1268.4 L2955.5 1268.4 L2958.9 988.8 L2970.0 988.8 L2974.5 949.0 L2976.9 949.0 L2981.4 1108.5 L2992.5 1108.5 L2996.6 1349.7 L3000.5 1349.7 L3004.4 1397.2 L3007.4 1397.2 L3011.3 1373.9 L3014.3 1373.9 L3019.2 1229.3 L3022.1 1229.3 L3026.1 1406.0 L3030.0 1406.0 L3034.0 1373.9 L3051.7 1373.9 L3055.6 1329.7 L3074.3 1329.7 L3078.2 1357.8 L3081.2 1357.8 L3085.1 1366.1 L3089.0 1366.1 L3093.0 1349.7 L3096.9 1349.7 L3100.8 1322.8 L3103.8 1322.8 L3107.7 1349.7 L3111.7 1349.7 L3115.6 1373.9 L3126.4 1373.9 L3130.4 1349.7 L3133.9 1349.7 L3134.0 1349.7" fill="none" stroke="#e9bf52" stroke-width="2" stroke-linejoin="round"/><path d="M72.0 1430 L72.0 747.3 L72.1 747.3 L76.3 628.9 L87.0 628.9 L90.5 749.0 L93.9 749.0 L98.1 821.1 L101.6 821.1 L106.1 788.9 L109.2 788.9 L112.6 834.9 L131.0 834.9 L134.5 838.4 L138.6 838.4 L143.1 868.5 L183.6 868.5 L188.1 903.2 L198.5 903.2 L203.7 948.9 L210.6 916.3 L221.0 916.3 L225.2 909.4 L249.8 909.4 L254.6 868.5 L266.1 868.5 L270.6 834.9 L276.5 868.5 L318.0 868.5 L321.5 838.7 L331.9 838.7 L335.3 834.9 L354.4 834.9 L358.5 788.9 L376.9 788.9 L381.0 725.2 L392.5 725.2 L395.9 688.8 L399.4 688.8 L402.9 725.2 L421.9 725.2 L425.4 821.1 L428.8 821.1 L433.0 868.5 L436.8 868.5 L441.0 948.9 L443.7 948.9 L447.9 989.0 L451.3 989.0 L454.8 1268.7 L456.4 1268.7 L459.5 1268.7 L462.7 1309.0 L466.1 1309.0 L470.5 1353.7 L477.8 1361.5 L484.0 1366.6 L504.5 1366.6 L508.6 1361.5 L513.0 1366.6 L531.2 1366.6 L536.0 1361.5 L543.8 1353.7 L555.8 1353.7 L559.5 1249.2 L570.6 1249.2 L574.7 1289.5 L585.3 1289.5 L588.5 1329.4 L600.4 1329.4 L604.2 1353.7 L615.5 1353.7 L619.3 1335.7 L629.7 1335.7 L633.5 1353.7 L642.9 1361.5 L650.8 1353.7 L656.4 1329.4 L659.3 1329.4 L663.4 1309.0 L674.4 1309.0 L679.1 1335.7 L688.5 1335.7 L693.3 1353.7 L704.3 1353.7 L708.4 1349.9 L718.4 1349.9 L723.1 1357.7 L731.0 1365.6 L742.0 1365.6 L746.7 1359.3 L753.0 1365.6 L759.3 1359.3 L773.5 1359.3 L776.6 1353.7 L786.1 1353.7 L789.8 1329.4 L793.0 1329.4 L797.1 1289.5 L800.2 1289.5 L804.9 1189.4 L808.1 1189.4 L812.8 1061.4 L838.6 1061.4 L842.7 1149.5 L845.8 1149.5 L849.0 1189.4 L850.0 1189.4 L853.1 1189.4 L857.9 1289.5 L861.0 1289.5 L865.1 1329.4 L867.3 1329.4 L872.0 1353.7 L879.9 1361.5 L886.2 1353.7 L890.0 1353.7 L894.0 1335.7 L897.8 1335.7 L901.9 1353.7 L934.9 1353.7 L939.7 1309.6 L942.8 1309.6 L946.9 1289.5 L950.7 1289.5 L954.8 1249.2 L957.9 1249.2 L961.7 1242.9 L964.8 1242.9 L968.9 1189.4 L971.8 1189.4 L975.8 1229.7 L979.6 1229.7 L983.7 1189.4 L986.9 1189.4 L990.9 1229.7 L994.7 1229.7 L998.5 1189.4 L1016.7 1189.4 L1021.5 1216.2 L1024.0 1216.2 L1028.4 1269.7 L1031.8 1269.7 L1036.6 1309.6 L1039.7 1309.6 L1042.9 1269.7 L1046.6 1269.7 L1050.7 1309.6 L1069.3 1309.6 L1073.4 1323.1 L1076.5 1323.1 L1080.6 1295.5 L1083.4 1295.5 L1087.5 1309.6 L1105.5 1309.6 L1109.5 1319.4 L1112.7 1319.4 L1115.8 1309.6 L1119.0 1309.6 L1123.7 1319.4 L1126.9 1319.4 L1134.7 1340.4 L1136.3 1340.4 L1139.4 1353.7 L1164.6 1353.7 L1169.3 1361.5 L1175.6 1365.6 L1183.5 1370.3 L1216.5 1370.3 L1221.2 1365.6 L1237.0 1365.6 L1247.0 1353.7 L1252.7 1329.4 L1255.8 1329.4 L1259.0 1289.5 L1260.0 1289.5 L1266.9 1253.9 L1277.3 1253.9 L1281.4 1229.7 L1321.3 1229.7 L1325.4 1253.9 L1329.2 1253.9 L1333.3 1309.6 L1336.4 1309.6 L1341.2 1289.5 L1344.3 1289.5 L1349.7 1329.4 L1351.9 1329.4 L1356.0 1353.7 L1371.7 1353.7 L1379.5 1340.4 L1385.8 1349.9 L1404.7 1349.9 L1410.4 1359.3 L1415.7 1349.9 L1448.8 1349.9 L1453.5 1329.4 L1456.6 1329.4 L1461.3 1289.5 L1463.5 1289.5 L1467.6 1253.9 L1477.1 1253.9 L1481.8 1249.2 L1485.9 1249.2 L1489.7 1221.8 L1530.6 1221.8 L1535.3 1249.2 L1540.9 1221.8 L1544.7 1221.8 L1549.4 1229.7 L1555.7 1221.8 L1567.7 1221.8 L1572.4 1249.2 L1575.5 1249.2 L1580.3 1242.9 L1589.7 1242.9 L1594.1 1282.2 L1598.2 1282.2 L1601.3 1279.7 L1604.5 1279.7 L1609.2 1299.5 L1612.4 1299.5 L1615.5 1319.4 L1618.6 1319.4 L1623.4 1338.9 L1626.5 1338.9 L1631.2 1319.4 L1634.4 1319.4 L1637.5 1335.7 L1650.1 1335.7 L1654.8 1349.9 L1670.0 1349.9 L1675.7 1237.6 L1693.6 1237.6 L1697.7 1269.7 L1716.6 1269.7 L1720.3 1282.2 L1745.5 1282.2 L1750.2 1229.7 L1753.4 1229.7 L1757.1 1149.5 L1760.6 1149.5 L1764.4 1136.0 L1791.1 1136.0 L1795.2 1189.4 L1798.4 1189.4 L1802.1 1229.7 L1805.9 1229.7 L1810.0 1279.1 L1813.1 1279.1 L1816.9 1298.0 L1820.4 1298.0 L1827.3 1302.7 L1832.0 1309.6 L1849.3 1309.6 L1854.0 1302.7 L1858.1 1302.7 L1863.5 1282.2 L1865.7 1282.2 L1869.8 1249.2 L1887.1 1249.2 L1891.8 1269.7 L1894.9 1269.7 L1898.1 1229.7 L1909.7 1229.7 L1913.8 1269.7 L1917.0 1269.7 L1920.7 1296.4 L1924.8 1296.4 L1929.5 1309.6 L1932.7 1309.6 L1936.8 1329.4 L1946.2 1329.4 L1950.9 1309.6 L1968.9 1309.6 L1972.6 1299.5 L1979.9 1282.9 L1984.6 1282.9 L1990.9 1279.7 L1995.6 1279.7 L1997.2 1229.7 L2000.3 1229.7 L2004.1 1189.4 L2007.3 1189.4 L2011.3 1136.0 L2022.4 1136.0 L2026.1 1129.7 L2028.6 1129.7 L2033.4 1169.0 L2042.8 1169.0 L2047.5 1189.4 L2058.5 1189.4 L2063.9 1203.0 L2072.7 1203.0 L2077.4 1229.7 L2080.0 1229.7 L2086.9 1229.7 L2092.0 1253.9 L2099.5 1221.8 L2106.7 1229.7 L2118.4 1229.7 L2122.5 1206.7 L2125.6 1206.7 L2130.3 1189.4 L2132.9 1189.4 L2137.3 1162.7 L2140.4 1162.7 L2144.5 1149.5 L2147.6 1149.5 L2152.4 1108.6 L2162.4 1108.6 L2167.1 1140.7 L2170.3 1140.7 L2174.4 1149.5 L2207.4 1149.5 L2211.5 1158.0 L2214.7 1158.0 L2218.4 1175.9 L2229.4 1175.9 L2234.2 1158.0 L2243.6 1158.0 L2248.3 1129.7 L2251.5 1129.7 L2256.2 1061.4 L2259.3 1061.4 L2263.4 1136.0 L2266.6 1136.0 L2271.0 1162.7 L2297.1 1162.7 L2300.2 1189.4 L2304.0 1189.4 L2308.1 1216.2 L2311.2 1216.2 L2316.0 1269.7 L2326.0 1269.7 L2330.7 1216.2 L2333.3 1216.2 L2338.0 1189.4 L2341.1 1189.4 L2345.8 1136.0 L2349.0 1136.0 L2353.5 1029.0 L2356.0 1029.0 L2360.5 928.6 L2363.9 928.6 L2368.1 869.0 L2370.9 869.0 L2375.4 820.5 L2377.8 820.5 L2383.0 789.0 L2408.3 789.0 L2413.1 835.1 L2460.9 835.1 L2464.3 789.0 L2467.8 789.0 L2472.0 835.1 L2504.9 834.7 L2509.1 788.6 L2527.4 788.6 L2531.6 834.7 L2534.3 834.7 L2538.5 868.6 L2549.6 868.6 L2554.1 820.8 L2564.5 820.8 L2568.6 828.8 L2572.1 828.8 L2576.6 868.6 L2616.4 868.6 L2620.6 948.9 L2645.8 948.9 L2650.0 937.5 L2653.5 937.5 L2658.0 948.9 L2663.2 948.9 L2665.6 916.7 L2676.0 916.7 L2680.5 988.8 L2690.2 988.8 L2695.0 948.9 L2713.4 948.9 L2717.5 868.6 L2728.3 868.6 L2731.7 948.9 L2735.2 948.9 L2740.0 788.6 L2742.8 788.6 L2747.0 748.8 L2750.4 748.8 L2754.2 724.9 L2758.4 724.9 L2761.8 788.6 L2780.9 788.6 L2784.3 834.7 L2794.7 834.7 L2796.9 838.8 L2817.7 838.8 L2821.2 834.6 L2840.2 834.6 L2844.3 788.6 L2862.0 788.6 L2866.2 820.8 L2868.9 820.8 L2873.8 868.5 L2892.1 868.5 L2895.6 828.4 L2899.0 828.4 L2902.5 820.8 L2906.0 820.8 L2911.1 868.5 L2914.6 868.5 L2918.8 820.8 L2921.5 820.8 L2925.0 748.1 L2928.5 748.1 L2932.6 724.5 L2944.0 724.5 L2948.2 628.6 L2958.6 628.6 L2963.1 724.5 L2966.5 724.5 L2970.7 748.1 L2980.4 748.1 L2985.6 788.6 L2988.3 788.6 L2993.5 834.6 L2996.0 834.6 L3007.4 916.1 L3041.0 916.1 L3045.1 868.7 L3069.7 868.7 L3074.5 828.4 L3077.3 828.4 L3081.8 868.5 L3092.9 868.5 L3097.0 916.1 L3107.8 916.1 L3111.9 949.0 L3115.4 949.0 L3118.8 1012.3 L3130.3 1012.3 L3134.0 917.1 L3134.0 1430 Z" fill="#6ED0E0" fill-opacity="0.1"/><path d="M72.0 747.3 L72.1 747.3 L76.3 628.9 L87.0 628.9 L90.5 749.0 L93.9 749.0 L98.1 821.1 L101.6 821.1 L106.1 788.9 L109.2 788.9 L112.6 834.9 L131.0 834.9 L134.5 838.4 L138.6 838.4 L143.1 868.5 L183.6 868.5 L188.1 903.2 L198.5 903.2 L203.7 948.9 L210.6 916.3 L221.0 916.3 L225.2 909.4 L249.8 909.4 L254.6 868.5 L266.1 868.5 L270.6 834.9 L276.5 868.5 L318.0 868.5 L321.5 838.7 L331.9 838.7 L335.3 834.9 L354.4 834.9 L358.5 788.9 L376.9 788.9 L381.0 725.2 L392.5 725.2 L395.9 688.8 L399.4 688.8 L402.9 725.2 L421.9 725.2 L425.4 821.1 L428.8 821.1 L433.0 868.5 L436.8 868.5 L441.0 948.9 L443.7 948.9 L447.9 989.0 L451.3 989.0 L454.8 1268.7 L456.4 1268.7 L459.5 1268.7 L462.7 1309.0 L466.1 1309.0 L470.5 1353.7 L477.8 1361.5 L484.0 1366.6 L504.5 1366.6 L508.6 1361.5 L513.0 1366.6 L531.2 1366.6 L536.0 1361.5 L543.8 1353.7 L555.8 1353.7 L559.5 1249.2 L570.6 1249.2 L574.7 1289.5 L585.3 1289.5 L588.5 1329.4 L600.4 1329.4 L604.2 1353.7 L615.5 1353.7 L619.3 1335.7 L629.7 1335.7 L633.5 1353.7 L642.9 1361.5 L650.8 1353.7 L656.4 1329.4 L659.3 1329.4 L663.4 1309.0 L674.4 1309.0 L679.1 1335.7 L688.5 1335.7 L693.3 1353.7 L704.3 1353.7 L708.4 1349.9 L718.4 1349.9 L723.1 1357.7 L731.0 1365.6 L742.0 1365.6 L746.7 1359.3 L753.0 1365.6 L759.3 1359.3 L773.5 1359.3 L776.6 1353.7 L786.1 1353.7 L789.8 1329.4 L793.0 1329.4 L797.1 1289.5 L800.2 1289.5 L804.9 1189.4 L808.1 1189.4 L812.8 1061.4 L838.6 1061.4 L842.7 1149.5 L845.8 1149.5 L849.0 1189.4 L850.0 1189.4 L853.1 1189.4 L857.9 1289.5 L861.0 1289.5 L865.1 1329.4 L867.3 1329.4 L872.0 1353.7 L879.9 1361.5 L886.2 1353.7 L890.0 1353.7 L894.0 1335.7 L897.8 1335.7 L901.9 1353.7 L934.9 1353.7 L939.7 1309.6 L942.8 1309.6 L946.9 1289.5 L950.7 1289.5 L954.8 1249.2 L957.9 1249.2 L961.7 1242.9 L964.8 1242.9 L968.9 1189.4 L971.8 1189.4 L975.8 1229.7 L979.6 1229.7 L983.7 1189.4 L986.9 1189.4 L990.9 1229.7 L994.7 1229.7 L998.5 1189.4 L1016.7 1189.4 L1021.5 1216.2 L1024.0 1216.2 L1028.4 1269.7 L1031.8 1269.7 L1036.6 1309.6 L1039.7 1309.6 L1042.9 1269.7 L1046.6 1269.7 L1050.7 1309.6 L1069.3 1309.6 L1073.4 1323.1 L1076.5 1323.1 L1080.6 1295.5 L1083.4 1295.5 L1087.5 1309.6 L1105.5 1309.6 L1109.5 1319.4 L1112.7 1319.4 L1115.8 1309.6 L1119.0 1309.6 L1123.7 1319.4 L1126.9 1319.4 L1134.7 1340.4 L1136.3 1340.4 L1139.4 1353.7 L1164.6 1353.7 L1169.3 1361.5 L1175.6 1365.6 L1183.5 1370.3 L1216.5 1370.3 L1221.2 1365.6 L1237.0 1365.6 L1247.0 1353.7 L1252.7 1329.4 L1255.8 1329.4 L1259.0 1289.5 L1260.0 1289.5 L1266.9 1253.9 L1277.3 1253.9 L1281.4 1229.7 L1321.3 1229.7 L1325.4 1253.9 L1329.2 1253.9 L1333.3 1309.6 L1336.4 1309.6 L1341.2 1289.5 L1344.3 1289.5 L1349.7 1329.4 L1351.9 1329.4 L1356.0 1353.7 L1371.7 1353.7 L1379.5 1340.4 L1385.8 1349.9 L1404.7 1349.9 L1410.4 1359.3 L1415.7 1349.9 L1448.8 1349.9 L1453.5 1329.4 L1456.6 1329.4 L1461.3 1289.5 L1463.5 1289.5 L1467.6 1253.9 L1477.1 1253.9 L1481.8 1249.2 L1485.9 1249.2 L1489.7 1221.8 L1530.6 1221.8 L1535.3 1249.2 L1540.9 1221.8 L1544.7 1221.8 L1549.4 1229.7 L1555.7 1221.8 L1567.7 1221.8 L1572.4 1249.2 L1575.5 1249.2 L1580.3 1242.9 L1589.7 1242.9 L1594.1 1282.2 L1598.2 1282.2 L1601.3 1279.7 L1604.5 1279.7 L1609.2 1299.5 L1612.4 1299.5 L1615.5 1319.4 L1618.6 1319.4 L1623.4 1338.9 L1626.5 1338.9 L1631.2 1319.4 L1634.4 1319.4 L1637.5 1335.7 L1650.1 1335.7 L1654.8 1349.9 L1670.0 1349.9 L1675.7 1237.6 L1693.6 1237.6 L1697.7 1269.7 L1716.6 1269.7 L1720.3 1282.2 L1745.5 1282.2 L1750.2 1229.7 L1753.4 1229.7 L1757.1 1149.5 L1760.6 1149.5 L1764.4 1136.0 L1791.1 1136.0 L1795.2 1189.4 L1798.4 1189.4 L1802.1 1229.7 L1805.9 1229.7 L1810.0 1279.1 L1813.1 1279.1 L1816.9 1298.0 L1820.4 1298.0 L1827.3 1302.7 L1832.0 1309.6 L1849.3 1309.6 L1854.0 1302.7 L1858.1 1302.7 L1863.5 1282.2 L1865.7 1282.2 L1869.8 1249.2 L1887.1 1249.2 L1891.8 1269.7 L1894.9 1269.7 L1898.1 1229.7 L1909.7 1229.7 L1913.8 1269.7 L1917.0 1269.7 L1920.7 1296.4 L1924.8 1296.4 L1929.5 1309.6 L1932.7 1309.6 L1936.8 1329.4 L1946.2 1329.4 L1950.9 1309.6 L1968.9 1309.6 L1972.6 1299.5 L1979.9 1282.9 L1984.6 1282.9 L1990.9 1279.7 L1995.6 1279.7 L1997.2 1229.7 L2000.3 1229.7 L2004.1 1189.4 L2007.3 1189.4 L2011.3 1136.0 L2022.4 1136.0 L2026.1 1129.7 L2028.6 1129.7 L2033.4 1169.0 L2042.8 1169.0 L2047.5 1189.4 L2058.5 1189.4 L2063.9 1203.0 L2072.7 1203.0 L2077.4 1229.7 L2080.0 1229.7 L2086.9 1229.7 L2092.0 1253.9 L2099.5 1221.8 L2106.7 1229.7 L2118.4 1229.7 L2122.5 1206.7 L2125.6 1206.7 L2130.3 1189.4 L2132.9 1189.4 L2137.3 1162.7 L2140.4 1162.7 L2144.5 1149.5 L2147.6 1149.5 L2152.4 1108.6 L2162.4 1108.6 L2167.1 1140.7 L2170.3 1140.7 L2174.4 1149.5 L2207.4 1149.5 L2211.5 1158.0 L2214.7 1158.0 L2218.4 1175.9 L2229.4 1175.9 L2234.2 1158.0 L2243.6 1158.0 L2248.3 1129.7 L2251.5 1129.7 L2256.2 1061.4 L2259.3 1061.4 L2263.4 1136.0 L2266.6 1136.0 L2271.0 1162.7 L2297.1 1162.7 L2300.2 1189.4 L2304.0 1189.4 L2308.1 1216.2 L2311.2 1216.2 L2316.0 1269.7 L2326.0 1269.7 L2330.7 1216.2 L2333.3 1216.2 L2338.0 1189.4 L2341.1 1189.4 L2345.8 1136.0 L2349.0 1136.0 L2353.5 1029.0 L2356.0 1029.0 L2360.5 928.6 L2363.9 928.6 L2368.1 869.0 L2370.9 869.0 L2375.4 820.5 L2377.8 820.5 L2383.0 789.0 L2408.3 789.0 L2413.1 835.1 L2460.9 835.1 L2464.3 789.0 L2467.8 789.0 L2472.0 835.1 L2504.9 834.7 L2509.1 788.6 L2527.4 788.6 L2531.6 834.7 L2534.3 834.7 L2538.5 868.6 L2549.6 868.6 L2554.1 820.8 L2564.5 820.8 L2568.6 828.8 L2572.1 828.8 L2576.6 868.6 L2616.4 868.6 L2620.6 948.9 L2645.8 948.9 L2650.0 937.5 L2653.5 937.5 L2658.0 948.9 L2663.2 948.9 L2665.6 916.7 L2676.0 916.7 L2680.5 988.8 L2690.2 988.8 L2695.0 948.9 L2713.4 948.9 L2717.5 868.6 L2728.3 868.6 L2731.7 948.9 L2735.2 948.9 L2740.0 788.6 L2742.8 788.6 L2747.0 748.8 L2750.4 748.8 L2754.2 724.9 L2758.4 724.9 L2761.8 788.6 L2780.9 788.6 L2784.3 834.7 L2794.7 834.7 L2796.9 838.8 L2817.7 838.8 L2821.2 834.6 L2840.2 834.6 L2844.3 788.6 L2862.0 788.6 L2866.2 820.8 L2868.9 820.8 L2873.8 868.5 L2892.1 868.5 L2895.6 828.4 L2899.0 828.4 L2902.5 820.8 L2906.0 820.8 L2911.1 868.5 L2914.6 868.5 L2918.8 820.8 L2921.5 820.8 L2925.0 748.1 L2928.5 748.1 L2932.6 724.5 L2944.0 724.5 L2948.2 628.6 L2958.6 628.6 L2963.1 724.5 L2966.5 724.5 L2970.7 748.1 L2980.4 748.1 L2985.6 788.6 L2988.3 788.6 L2993.5 834.6 L2996.0 834.6 L3007.4 916.1 L3041.0 916.1 L3045.1 868.7 L3069.7 868.7 L3074.5 828.4 L3077.3 828.4 L3081.8 868.5 L3092.9 868.5 L3097.0 916.1 L3107.8 916.1 L3111.9 949.0 L3115.4 949.0 L3118.8 1012.3 L3130.3 1012.3 L3134.0 917.1" fill="none" stroke="#84d1e2" stroke-width="2" stroke-linejoin="round"/><path d="M72.0 1430 L72.0 1325.5 L72.1 1325.5 L76.3 1330.0 L79.0 1330.0 L83.2 1317.9 L86.0 1317.9 L91.2 1309.3 L94.6 1309.3 L98.1 1317.9 L101.6 1317.9 L105.7 1309.3 L108.5 1309.3 L112.6 1296.5 L139.7 1296.5 L143.1 1297.8 L167.4 1297.8 L172.6 1289.2 L176.0 1289.2 L179.5 1296.5 L183.6 1296.5 L188.1 1286.1 L190.9 1286.1 L195.8 1268.7 L198.5 1268.7 L202.0 628.9 L221.0 628.9 L223.8 1268.7 L228.7 1268.7 L231.4 628.9 L235.9 628.9 L239.0 1268.7 L243.5 1268.7 L247.0 1189.8 L249.8 1189.8 L254.6 1279.1 L265.0 1279.1 L269.5 1293.7 L279.9 1293.7 L285.1 1289.2 L290.3 1286.1 L302.4 1286.1 L306.9 1268.7 L317.0 1268.7 L321.5 1189.8 L324.9 1189.8 L329.4 1268.7 L339.8 1268.7 L344.0 1189.8 L370.0 1189.8 L373.4 1216.5 L384.5 1216.5 L389.0 1268.7 L391.8 1268.7 L395.9 1229.3 L406.3 1229.3 L410.5 1268.7 L428.8 1268.7 L433.3 1290.2 L437.5 1290.2 L441.0 1299.6 L465.2 1299.5 L469.9 1282.9 L473.7 1282.9 L477.8 1253.3 L480.9 1253.3 L485.6 1279.7 L503.9 1279.7 L507.6 1253.3 L510.8 1253.3 L515.5 1277.5 L524.9 1277.5 L529.7 1289.5 L532.8 1289.5 L536.9 1298.0 L562.7 1298.0 L567.4 1289.5 L569.6 1289.5 L574.7 1298.0 L592.6 1298.0 L597.3 1289.5 L607.4 1289.5 L611.5 1296.4 L629.7 1296.4 L634.1 1303.6 L644.5 1303.6 L648.6 1296.4 L659.3 1296.4 L664.0 1303.6 L680.7 1304.9 L686.3 1298.0 L693.3 1289.5 L696.4 1289.5 L701.1 1277.5 L718.4 1277.5 L726.3 1279.7 L731.0 1249.2 L749.9 1249.2 L753.7 1279.7 L756.2 1279.7 L760.9 1299.5 L764.0 1299.5 L768.1 1309.0 L775.1 1318.4 L778.2 1318.4 L782.9 1325.7 L786.1 1325.7 L790.8 1309.0 L793.0 1309.0 L798.6 1316.9 L804.9 1309.0 L808.7 1309.0 L812.8 1299.5 L816.0 1299.5 L820.0 1282.9 L823.2 1282.9 L827.0 1242.9 L838.0 1242.9 L842.7 1189.4 L845.8 1189.4 L850.0 1169.0 L868.2 1169.0 L872.0 1209.9 L875.2 1209.9 L879.3 1229.7 L882.4 1229.7 L887.1 1269.7 L897.2 1269.7 L901.3 1229.7 L905.1 1229.7 L909.1 1269.7 L919.2 1269.7 L923.9 1289.5 L942.8 1289.5 L946.9 1293.3 L950.0 1289.5 L954.8 1277.5 L957.0 1277.5 L961.7 1289.5 L971.8 1289.5 L975.8 1277.5 L986.9 1277.5 L991.6 1253.9 L1016.7 1253.9 L1021.5 1277.5 L1024.0 1277.5 L1028.4 1249.2 L1031.8 1249.2 L1035.6 1277.5 L1038.8 1277.5 L1043.5 1289.5 L1046.6 1289.5 L1050.7 1298.0 L1090.7 1298.0 L1094.8 1304.9 L1120.6 1304.9 L1125.3 1309.6 L1134.7 1309.6 L1138.8 1304.9 L1142.0 1304.9 L1147.3 1298.0 L1174.0 1298.0 L1179.7 1295.5 L1185.1 1285.4 L1187.3 1285.4 L1192.3 1269.7 L1217.5 1269.7 L1221.2 1229.7 L1232.2 1229.7 L1236.3 1205.2 L1240.1 1205.2 L1243.3 1203.0 L1254.9 1203.0 L1259.0 1189.4 L1260.0 1189.4 L1271.0 1189.4 L1274.2 1209.9 L1277.3 1209.9 L1280.4 1242.9 L1283.6 1242.9 L1288.3 1277.5 L1299.3 1277.5 L1304.0 1289.5 L1316.6 1289.5 L1321.3 1298.0 L1326.1 1304.9 L1365.4 1304.9 L1370.1 1298.0 L1395.3 1298.0 L1400.0 1289.5 L1403.1 1289.5 L1407.9 1277.5 L1411.0 1277.5 L1414.2 1261.8 L1422.0 1229.7 L1425.2 1229.7 L1429.9 1211.5 L1433.0 1211.5 L1437.8 1216.2 L1448.1 1216.2 L1452.5 1200.4 L1455.1 1200.4 L1459.8 1189.4 L1478.6 1189.4 L1482.7 1200.4 L1484.9 1200.4 L1489.7 1216.2 L1492.2 1216.2 L1496.6 1237.6 L1499.1 1237.6 L1503.8 1253.9 L1507.0 1253.9 L1511.7 1277.5 L1520.5 1277.5 L1525.8 1293.3 L1536.9 1293.3 L1542.5 1302.7 L1547.9 1293.3 L1551.0 1293.3 L1555.7 1279.7 L1558.9 1279.7 L1564.5 1253.9 L1574.6 1253.9 L1578.7 1221.8 L1589.7 1221.8 L1593.5 1203.0 L1596.0 1203.0 L1601.3 1189.4 L1634.4 1189.4 L1638.5 1149.5 L1642.2 1149.5 L1646.3 1189.4 L1649.5 1189.4 L1653.3 1162.7 L1656.4 1162.7 L1661.1 1108.6 L1664.3 1108.6 L1669.0 1189.4 L1670.0 1189.4 L1675.7 1162.7 L1679.4 1162.7 L1683.2 1189.4 L1686.4 1189.4 L1690.4 1269.7 L1694.5 1269.7 L1699.9 1277.5 L1701.5 1277.5 L1705.2 1289.5 L1716.6 1289.5 L1721.0 1298.0 L1727.3 1304.9 L1734.5 1298.0 L1741.7 1304.9 L1753.4 1304.9 L1757.5 1298.0 L1767.5 1298.0 L1772.2 1289.5 L1799.0 1289.5 L1802.1 1298.0 L1819.4 1298.0 L1824.2 1302.7 L1835.2 1302.7 L1840.8 1309.6 L1846.2 1304.9 L1872.9 1304.9 L1876.1 1296.4 L1902.8 1296.4 L1906.9 1285.4 L1909.7 1285.4 L1913.8 1296.4 L1917.0 1296.4 L1921.7 1286.0 L1927.3 1269.7 L1935.8 1249.2 L1939.0 1249.2 L1943.7 1277.5 L1954.7 1277.5 L1958.8 1249.2 L1972.0 1249.2 L1975.2 1277.5 L1983.0 1277.5 L1987.7 1293.3 L1998.8 1293.3 L2003.5 1302.7 L2008.2 1293.3 L2017.6 1279.7 L2020.8 1279.7 L2025.5 1293.3 L2030.2 1293.3 L2034.9 1299.5 L2042.8 1299.5 L2047.5 1293.3 L2074.3 1293.3 L2079.0 1302.7 L2080.0 1302.7 L2084.7 1309.6 L2095.7 1309.6 L2100.4 1303.6 L2110.5 1303.6 L2114.6 1296.4 L2122.5 1285.4 L2131.9 1285.4 L2137.3 1269.7 L2147.6 1269.7 L2152.4 1237.6 L2155.5 1237.6 L2160.2 1253.9 L2163.4 1253.9 L2169.7 1221.8 L2171.2 1221.8 L2174.4 1189.4 L2179.1 1189.4 L2182.2 1169.0 L2186.3 1169.0 L2190.7 1189.4 L2193.3 1189.4 L2197.0 1149.5 L2200.2 1149.5 L2204.3 1189.4 L2215.3 1189.4 L2218.4 1277.5 L2251.5 1277.5 L2256.2 1229.7 L2260.0 1229.7 L2264.7 1269.7 L2267.2 1269.7 L2271.9 1216.2 L2281.3 1216.2 L2286.1 1189.4 L2297.1 1189.4 L2301.8 1216.2 L2304.9 1216.2 L2309.7 1229.7 L2314.4 1229.7 L2318.2 1237.6 L2322.9 1269.7 L2330.1 1277.5 L2341.1 1277.5 L2345.8 1242.9 L2355.9 1242.9 L2361.6 1209.9 L2364.7 1209.9 L2369.4 1189.4 L2385.2 1189.4 L2390.8 1149.5 L2394.0 1149.5 L2397.7 1108.6 L2400.0 1108.6 L2407.9 1108.6 L2412.6 1149.5 L2415.7 1149.5 L2419.8 1108.6 L2445.6 1108.6 L2449.2 948.9 L2452.6 948.9 L2463.9 1189.4 L2467.6 1189.4 L2471.7 1269.7 L2474.9 1269.7 L2478.7 1189.4 L2490.3 1189.4 L2494.4 1108.6 L2505.4 1108.6 L2508.4 988.8 L2512.5 988.8 L2516.4 1189.4 L2519.5 1189.4 L2524.3 1277.5 L2526.5 1277.5 L2530.6 1269.7 L2565.2 1269.7 L2568.6 1013.0 L2572.1 1013.0 L2575.9 988.8 L2579.4 988.8 L2582.8 868.6 L2587.0 868.6 L2591.1 748.8 L2609.5 748.8 L2613.0 628.7 L2632.0 628.7 L2636.0 1108.6 L2639.7 1108.6 L2643.8 1189.4 L2647.0 1189.4 L2651.1 1216.2 L2653.3 1216.2 L2659.5 1229.7 L2665.8 1209.9 L2683.1 1209.9 L2688.5 1189.4 L2691.0 1189.4 L2694.8 1173.7 L2705.2 1173.7 L2711.5 1162.7 L2717.7 1173.7 L2728.8 1173.7 L2732.9 1205.2 L2736.0 1205.2 L2739.8 1229.7 L2749.8 1229.7 L2755.5 1269.7 L2761.8 1242.9 L2765.6 1242.9 L2769.7 1277.5 L2771.9 1277.5 L2777.5 1289.5 L2785.4 1277.5 L2791.1 1289.5 L2802.8 1289.7 L2806.7 1285.8 L2824.4 1285.8 L2829.3 1296.8 L2836.2 1285.8 L2839.2 1285.8 L2844.1 1269.7 L2847.1 1269.7 L2852.0 1285.8 L2854.9 1285.8 L2858.9 1269.7 L2868.7 1269.7 L2873.6 1277.9 L2876.6 1277.9 L2881.5 1289.7 L2884.4 1289.7 L2889.4 1277.9 L2892.3 1277.9 L2896.2 1242.5 L2899.2 1242.5 L2903.7 1277.2 L2907.1 1277.2 L2911.0 1285.8 L2914.3 1285.8 L2918.9 1269.7 L2929.7 1269.7 L2933.6 1229.3 L2943.5 1229.3 L2948.4 1205.7 L2950.3 1205.7 L2955.5 1188.8 L2958.9 1188.8 L2963.1 1215.8 L2973.5 1215.8 L2978.6 1242.5 L2981.4 1242.5 L2985.6 1229.7 L2996.0 1229.7 L3001.1 1268.4 L3004.6 1268.4 L3008.1 1108.5 L3011.5 1108.5 L3015.7 1268.4 L3025.4 1268.4 L3029.5 468.7 L3055.8 468.7 L3060.0 1108.5 L3063.5 1108.5 L3066.9 1149.0 L3069.7 1149.0 L3074.5 1188.8 L3086.0 1188.8 L3090.4 1215.8 L3092.9 1215.8 L3097.4 1229.7 L3106.7 1229.7 L3111.9 1268.4 L3122.3 1268.4 L3127.5 1215.8 L3133.7 1215.8 L3134.0 1215.8 L3134.0 1430 Z" fill="#EF843C" fill-opacity="0.1"/><path d="M72.0 1325.5 L72.1 1325.5 L76.3 1330.0 L79.0 1330.0 L83.2 1317.9 L86.0 1317.9 L91.2 1309.3 L94.6 1309.3 L98.1 1317.9 L101.6 1317.9 L105.7 1309.3 L108.5 1309.3 L112.6 1296.5 L139.7 1296.5 L143.1 1297.8 L167.4 1297.8 L172.6 1289.2 L176.0 1289.2 L179.5 1296.5 L183.6 1296.5 L188.1 1286.1 L190.9 1286.1 L195.8 1268.7 L198.5 1268.7 L202.0 628.9 L221.0 628.9 L223.8 1268.7 L228.7 1268.7 L231.4 628.9 L235.9 628.9 L239.0 1268.7 L243.5 1268.7 L247.0 1189.8 L249.8 1189.8 L254.6 1279.1 L265.0 1279.1 L269.5 1293.7 L279.9 1293.7 L285.1 1289.2 L290.3 1286.1 L302.4 1286.1 L306.9 1268.7 L317.0 1268.7 L321.5 1189.8 L324.9 1189.8 L329.4 1268.7 L339.8 1268.7 L344.0 1189.8 L370.0 1189.8 L373.4 1216.5 L384.5 1216.5 L389.0 1268.7 L391.8 1268.7 L395.9 1229.3 L406.3 1229.3 L410.5 1268.7 L428.8 1268.7 L433.3 1290.2 L437.5 1290.2 L441.0 1299.6 L465.2 1299.5 L469.9 1282.9 L473.7 1282.9 L477.8 1253.3 L480.9 1253.3 L485.6 1279.7 L503.9 1279.7 L507.6 1253.3 L510.8 1253.3 L515.5 1277.5 L524.9 1277.5 L529.7 1289.5 L532.8 1289.5 L536.9 1298.0 L562.7 1298.0 L567.4 1289.5 L569.6 1289.5 L574.7 1298.0 L592.6 1298.0 L597.3 1289.5 L607.4 1289.5 L611.5 1296.4 L629.7 1296.4 L634.1 1303.6 L644.5 1303.6 L648.6 1296.4 L659.3 1296.4 L664.0 1303.6 L680.7 1304.9 L686.3 1298.0 L693.3 1289.5 L696.4 1289.5 L701.1 1277.5 L718.4 1277.5 L726.3 1279.7 L731.0 1249.2 L749.9 1249.2 L753.7 1279.7 L756.2 1279.7 L760.9 1299.5 L764.0 1299.5 L768.1 1309.0 L775.1 1318.4 L778.2 1318.4 L782.9 1325.7 L786.1 1325.7 L790.8 1309.0 L793.0 1309.0 L798.6 1316.9 L804.9 1309.0 L808.7 1309.0 L812.8 1299.5 L816.0 1299.5 L820.0 1282.9 L823.2 1282.9 L827.0 1242.9 L838.0 1242.9 L842.7 1189.4 L845.8 1189.4 L850.0 1169.0 L868.2 1169.0 L872.0 1209.9 L875.2 1209.9 L879.3 1229.7 L882.4 1229.7 L887.1 1269.7 L897.2 1269.7 L901.3 1229.7 L905.1 1229.7 L909.1 1269.7 L919.2 1269.7 L923.9 1289.5 L942.8 1289.5 L946.9 1293.3 L950.0 1289.5 L954.8 1277.5 L957.0 1277.5 L961.7 1289.5 L971.8 1289.5 L975.8 1277.5 L986.9 1277.5 L991.6 1253.9 L1016.7 1253.9 L1021.5 1277.5 L1024.0 1277.5 L1028.4 1249.2 L1031.8 1249.2 L1035.6 1277.5 L1038.8 1277.5 L1043.5 1289.5 L1046.6 1289.5 L1050.7 1298.0 L1090.7 1298.0 L1094.8 1304.9 L1120.6 1304.9 L1125.3 1309.6 L1134.7 1309.6 L1138.8 1304.9 L1142.0 1304.9 L1147.3 1298.0 L1174.0 1298.0 L1179.7 1295.5 L1185.1 1285.4 L1187.3 1285.4 L1192.3 1269.7 L1217.5 1269.7 L1221.2 1229.7 L1232.2 1229.7 L1236.3 1205.2 L1240.1 1205.2 L1243.3 1203.0 L1254.9 1203.0 L1259.0 1189.4 L1260.0 1189.4 L1271.0 1189.4 L1274.2 1209.9 L1277.3 1209.9 L1280.4 1242.9 L1283.6 1242.9 L1288.3 1277.5 L1299.3 1277.5 L1304.0 1289.5 L1316.6 1289.5 L1321.3 1298.0 L1326.1 1304.9 L1365.4 1304.9 L1370.1 1298.0 L1395.3 1298.0 L1400.0 1289.5 L1403.1 1289.5 L1407.9 1277.5 L1411.0 1277.5 L1414.2 1261.8 L1422.0 1229.7 L1425.2 1229.7 L1429.9 1211.5 L1433.0 1211.5 L1437.8 1216.2 L1448.1 1216.2 L1452.5 1200.4 L1455.1 1200.4 L1459.8 1189.4 L1478.6 1189.4 L1482.7 1200.4 L1484.9 1200.4 L1489.7 1216.2 L1492.2 1216.2 L1496.6 1237.6 L1499.1 1237.6 L1503.8 1253.9 L1507.0 1253.9 L1511.7 1277.5 L1520.5 1277.5 L1525.8 1293.3 L1536.9 1293.3 L1542.5 1302.7 L1547.9 1293.3 L1551.0 1293.3 L1555.7 1279.7 L1558.9 1279.7 L1564.5 1253.9 L1574.6 1253.9 L1578.7 1221.8 L1589.7 1221.8 L1593.5 1203.0 L1596.0 1203.0 L1601.3 1189.4 L1634.4 1189.4 L1638.5 1149.5 L1642.2 1149.5 L1646.3 1189.4 L1649.5 1189.4 L1653.3 1162.7 L1656.4 1162.7 L1661.1 1108.6 L1664.3 1108.6 L1669.0 1189.4 L1670.0 1189.4 L1675.7 1162.7 L1679.4 1162.7 L1683.2 1189.4 L1686.4 1189.4 L1690.4 1269.7 L1694.5 1269.7 L1699.9 1277.5 L1701.5 1277.5 L1705.2 1289.5 L1716.6 1289.5 L1721.0 1298.0 L1727.3 1304.9 L1734.5 1298.0 L1741.7 1304.9 L1753.4 1304.9 L1757.5 1298.0 L1767.5 1298.0 L1772.2 1289.5 L1799.0 1289.5 L1802.1 1298.0 L1819.4 1298.0 L1824.2 1302.7 L1835.2 1302.7 L1840.8 1309.6 L1846.2 1304.9 L1872.9 1304.9 L1876.1 1296.4 L1902.8 1296.4 L1906.9 1285.4 L1909.7 1285.4 L1913.8 1296.4 L1917.0 1296.4 L1921.7 1286.0 L1927.3 1269.7 L1935.8 1249.2 L1939.0 1249.2 L1943.7 1277.5 L1954.7 1277.5 L1958.8 1249.2 L1972.0 1249.2 L1975.2 1277.5 L1983.0 1277.5 L1987.7 1293.3 L1998.8 1293.3 L2003.5 1302.7 L2008.2 1293.3 L2017.6 1279.7 L2020.8 1279.7 L2025.5 1293.3 L2030.2 1293.3 L2034.9 1299.5 L2042.8 1299.5 L2047.5 1293.3 L2074.3 1293.3 L2079.0 1302.7 L2080.0 1302.7 L2084.7 1309.6 L2095.7 1309.6 L2100.4 1303.6 L2110.5 1303.6 L2114.6 1296.4 L2122.5 1285.4 L2131.9 1285.4 L2137.3 1269.7 L2147.6 1269.7 L2152.4 1237.6 L2155.5 1237.6 L2160.2 1253.9 L2163.4 1253.9 L2169.7 1221.8 L2171.2 1221.8 L2174.4 1189.4 L2179.1 1189.4 L2182.2 1169.0 L2186.3 1169.0 L2190.7 1189.4 L2193.3 1189.4 L2197.0 1149.5 L2200.2 1149.5 L2204.3 1189.4 L2215.3 1189.4 L2218.4 1277.5 L2251.5 1277.5 L2256.2 1229.7 L2260.0 1229.7 L2264.7 1269.7 L2267.2 1269.7 L2271.9 1216.2 L2281.3 1216.2 L2286.1 1189.4 L2297.1 1189.4 L2301.8 1216.2 L2304.9 1216.2 L2309.7 1229.7 L2314.4 1229.7 L2318.2 1237.6 L2322.9 1269.7 L2330.1 1277.5 L2341.1 1277.5 L2345.8 1242.9 L2355.9 1242.9 L2361.6 1209.9 L2364.7 1209.9 L2369.4 1189.4 L2385.2 1189.4 L2390.8 1149.5 L2394.0 1149.5 L2397.7 1108.6 L2400.0 1108.6 L2407.9 1108.6 L2412.6 1149.5 L2415.7 1149.5 L2419.8 1108.6 L2445.6 1108.6 L2449.2 948.9 L2452.6 948.9 L2463.9 1189.4 L2467.6 1189.4 L2471.7 1269.7 L2474.9 1269.7 L2478.7 1189.4 L2490.3 1189.4 L2494.4 1108.6 L2505.4 1108.6 L2508.4 988.8 L2512.5 988.8 L2516.4 1189.4 L2519.5 1189.4 L2524.3 1277.5 L2526.5 1277.5 L2530.6 1269.7 L2565.2 1269.7 L2568.6 1013.0 L2572.1 1013.0 L2575.9 988.8 L2579.4 988.8 L2582.8 868.6 L2587.0 868.6 L2591.1 748.8 L2609.5 748.8 L2613.0 628.7 L2632.0 628.7 L2636.0 1108.6 L2639.7 1108.6 L2643.8 1189.4 L2647.0 1189.4 L2651.1 1216.2 L2653.3 1216.2 L2659.5 1229.7 L2665.8 1209.9 L2683.1 1209.9 L2688.5 1189.4 L2691.0 1189.4 L2694.8 1173.7 L2705.2 1173.7 L2711.5 1162.7 L2717.7 1173.7 L2728.8 1173.7 L2732.9 1205.2 L2736.0 1205.2 L2739.8 1229.7 L2749.8 1229.7 L2755.5 1269.7 L2761.8 1242.9 L2765.6 1242.9 L2769.7 1277.5 L2771.9 1277.5 L2777.5 1289.5 L2785.4 1277.5 L2791.1 1289.5 L2802.8 1289.7 L2806.7 1285.8 L2824.4 1285.8 L2829.3 1296.8 L2836.2 1285.8 L2839.2 1285.8 L2844.1 1269.7 L2847.1 1269.7 L2852.0 1285.8 L2854.9 1285.8 L2858.9 1269.7 L2868.7 1269.7 L2873.6 1277.9 L2876.6 1277.9 L2881.5 1289.7 L2884.4 1289.7 L2889.4 1277.9 L2892.3 1277.9 L2896.2 1242.5 L2899.2 1242.5 L2903.7 1277.2 L2907.1 1277.2 L2911.0 1285.8 L2914.3 1285.8 L2918.9 1269.7 L2929.7 1269.7 L2933.6 1229.3 L2943.5 1229.3 L2948.4 1205.7 L2950.3 1205.7 L2955.5 1188.8 L2958.9 1188.8 L2963.1 1215.8 L2973.5 1215.8 L2978.6 1242.5 L2981.4 1242.5 L2985.6 1229.7 L2996.0 1229.7 L3001.1 1268.4 L3004.6 1268.4 L3008.1 1108.5 L3011.5 1108.5 L3015.7 1268.4 L3025.4 1268.4 L3029.5 468.7 L3055.8 468.7 L3060.0 1108.5 L3063.5 1108.5 L3066.9 1149.0 L3069.7 1149.0 L3074.5 1188.8 L3086.0 1188.8 L3090.4 1215.8 L3092.9 1215.8 L3097.4 1229.7 L3106.7 1229.7 L3111.9 1268.4 L3122.3 1268.4 L3127.5 1215.8 L3133.7 1215.8 L3134.0 1215.8" fill="none" stroke="#eb894a" stroke-width="2" stroke-linejoin="round"/></g>
<g><line x1="441" y1="146" x2="441" y2="1430" stroke="#5bc0e8" stroke-width="2" stroke-dasharray="6 4"/><polygon points="431,1444 451,1444 441,1433" fill="#4aa9d2"/><line x1="939" y1="146" x2="939" y2="1430" stroke="#5bc0e8" stroke-width="2" stroke-dasharray="6 4"/><polygon points="929,1444 949,1444 939,1433" fill="#4aa9d2"/><line x1="1195" y1="146" x2="1195" y2="1430" stroke="#5bc0e8" stroke-width="2" stroke-dasharray="6 4"/><polygon points="1185,1444 1205,1444 1195,1433" fill="#4aa9d2"/><line x1="1372.6" y1="146" x2="1372.6" y2="1430" stroke="#5bc0e8" stroke-width="2" stroke-dasharray="6 4"/><polygon points="1362.6,1444 1382.6,1444 1372.6,1433" fill="#4aa9d2"/><line x1="1972.6" y1="146" x2="1972.6" y2="1430" stroke="#5bc0e8" stroke-width="2" stroke-dasharray="6 4"/><polygon points="1962.6,1444 1982.6,1444 1972.6,1433" fill="#4aa9d2"/></g>
<g class="lg"><line x1="52.5" y1="1524" x2="71.5" y2="1524" stroke="#8dbe78" stroke-width="3" stroke-linecap="round"/><text x="85.5" y="1529" textLength="314" lengthAdjust="spacingAndGlyphs">{goldpinger_instance="absis"}</text><line x1="426.5" y1="1524" x2="445.5" y2="1524" stroke="#e9bf52" stroke-width="3" stroke-linecap="round"/><text x="458.5" y="1529" textLength="353" lengthAdjust="spacingAndGlyphs">{goldpinger_instance="leviathan"}</text><line x1="838.5" y1="1524" x2="857.5" y2="1524" stroke="#84d1e2" stroke-width="3" stroke-linecap="round"/><text x="871" y="1529" textLength="336" lengthAdjust="spacingAndGlyphs">{goldpinger_instance="nimbus"}</text><line x1="1234.5" y1="1524" x2="1253.5" y2="1524" stroke="#eb894a" stroke-width="3" stroke-linecap="round"/><text x="1267" y="1529" textLength="344" lengthAdjust="spacingAndGlyphs">{goldpinger_instance="smicro1"}</text></g>
</svg>
</body></html>
